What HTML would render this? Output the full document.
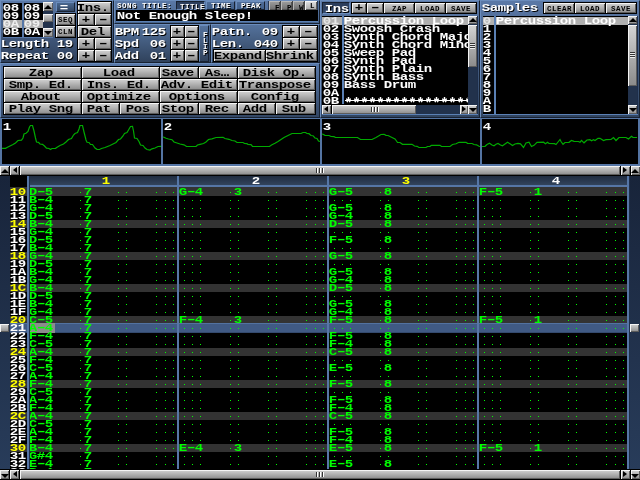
<!DOCTYPE html>
<html><head><meta charset="utf-8"><title>Tracker</title><style>
html,body{margin:0;padding:0;background:#40608c;overflow:hidden}
#r{position:relative;width:640px;height:480px;overflow:hidden;will-change:transform;font-family:"Liberation Mono",monospace}
#r div,#r span,#r i,#r svg{position:absolute;display:block}
.clip{overflow:hidden}
.p{box-sizing:border-box;border:1px solid;border-color:#6a8cbc #182232 #182232 #6a8cbc}
.b{box-sizing:border-box;border:1px solid #000;background:linear-gradient(#d4d4d4,#8a8a8a);box-shadow:inset 1px 1px 0 #f4f4f4,inset -1px -1px 0 #5c5c5c}
.b.pr{background:linear-gradient(#2a3c5a,#384e72);box-shadow:inset 1px 1px 0 #1a2840,inset -1px -1px 0 #5878a8;border-color:#101828}
.b.nb{border:0}
.b.hi{background:linear-gradient(#e4e4e4,#a8a8a8)}
.b.dk{background:linear-gradient(#a0a0a0,#6c6c6c);box-shadow:inset 1px 1px 0 #b8b8b8,inset -1px -1px 0 #555}
.t{font:bold 11px/8px "Liberation Mono",monospace;height:8px;white-space:pre;color:#fff;letter-spacing:-0.35px;transform-origin:0 0;transform:translateX(-1.3px) scale(1.28,0.96);text-shadow:0.8px 1px 0 #000}
.fl{box-sizing:border-box;border:1px solid;border-color:#6a8cbc #182232 #182232 #6a8cbc;background:linear-gradient(#54729c,#30425c)}
.fl.prs{border-color:#182232 #6a8cbc #6a8cbc #182232;background:linear-gradient(#2a3c5a,#34486a)}
.ast{font:bold 16px/16px "Liberation Mono",monospace;height:16px;white-space:pre;color:#fff;transform-origin:0 0;transform:translate(-0.5px,0.6px) scale(0.8333,0.9)}
.t.w{transform:translate(-3.6px,-0.8px) scale(2.05,0.96)}
.t.n{text-shadow:none}
.t.k{text-shadow:none;color:#000}
.s{font:bold 7.5px/6px "Liberation Mono",monospace;height:6px;white-space:pre;color:#fff;letter-spacing:0.5px;text-shadow:1px 1px 0 #000}
.s.k{text-shadow:none;color:#000}
.sc{font:bold 9px/8px "Liberation Mono",monospace;height:8px;white-space:pre;color:#fff}
.d{width:1px;height:1px;background:#0f0}
.au{width:0;height:0;border-left:4px solid transparent;border-right:4px solid transparent;border-bottom:4px solid #000}
.ad{width:0;height:0;border-left:4px solid transparent;border-right:4px solid transparent;border-top:4px solid #000}
.al{width:0;height:0;border-top:3.5px solid transparent;border-bottom:3.5px solid transparent;border-right:4px solid #000}
.ar{width:0;height:0;border-top:3.5px solid transparent;border-bottom:3.5px solid transparent;border-left:4px solid #000}
.grip{width:5px;height:6px;background:repeating-linear-gradient(#333 0 1px,#eee 1px 2px)}
.gripv{width:9px;height:5px;background:repeating-linear-gradient(90deg,#333 0 1px,#fff 1px 2px,transparent 2px 3px)}
</style></head><body><div id="r">
<div class="p" style="left:0px;top:0px;width:114px;height:63px;background:linear-gradient(#5a78a6,#2e405c)"></div>
<div class="p" style="left:114px;top:0px;width:206px;height:24px;background:linear-gradient(#5a78a6,#46648c)"></div>
<div class="p" style="left:114px;top:24px;width:97px;height:39px;background:linear-gradient(#54729c,#30425c)"></div>
<div class="p" style="left:211px;top:24px;width:109px;height:39px;background:linear-gradient(#54729c,#30425c)"></div>
<div class="p" style="left:0px;top:63px;width:320px;height:55px;background:linear-gradient(#5878a8,#324664)"></div>
<div class="p" style="left:320px;top:0px;width:160px;height:118px;background:linear-gradient(#5a78a6,#304460)"></div>
<div class="p" style="left:480px;top:0px;width:160px;height:118px;background:linear-gradient(#5a78a6,#304460)"></div>
<div style="left:3px;top:3px;width:19px;height:34px;background:#000;"></div>
<div style="left:22px;top:3px;width:2px;height:34px;background:#5676a6;"></div>
<div style="left:24px;top:3px;width:19px;height:34px;background:#000;"></div>
<div style="left:3px;top:37px;width:50px;height:1px;background:#5676a6;"></div>
<span class="t n" style="left:4px;top:4px;color:#fff;">08</span>
<span class="t n" style="left:25px;top:4px;color:#fff;">08</span>
<span class="t n" style="left:4px;top:12px;color:#fff;">09</span>
<span class="t n" style="left:25px;top:12px;color:#fff;">09</span>
<div style="left:3px;top:20px;width:19px;height:8px;background:#b0b0b0;"></div>
<div style="left:24px;top:20px;width:19px;height:8px;background:#b0b0b0;"></div>
<span class="t n" style="left:4px;top:20px;color:#eee;">0A</span>
<span class="t n" style="left:25px;top:20px;color:#eee;">09</span>
<span class="t n" style="left:4px;top:28px;color:#fff;">0B</span>
<span class="t n" style="left:25px;top:28px;color:#fff;">0A</span>
<div style="left:43px;top:2px;width:10px;height:35px;background:#22324c;"></div>
<div class="b nb" style="left:43px;top:2px;width:10px;height:9px"></div>
<i class="au" style="left:44px;top:5px"></i>
<div class="b nb" style="left:43px;top:14px;width:10px;height:8px"></div>
<div class="b nb" style="left:43px;top:28px;width:10px;height:9px"></div>
<i class="ad" style="left:44px;top:31px"></i>
<div class="fl" style="left:56px;top:2px;width:19px;height:10px;background:linear-gradient(#4a6890,#304462)"></div>
<span class="t n" style="left:61px;top:4px;color:#fff;">=</span>
<div class="b" style="left:55px;top:13px;width:21px;height:13px"></div>
<span class="s k" style="left:58px;top:17px;color:#000;">SEQ</span>
<div class="b" style="left:55px;top:25px;width:21px;height:13px"></div>
<span class="s k" style="left:58px;top:29px;color:#000;">CLN</span>
<div class="b" style="left:77px;top:1px;width:35px;height:13px"></div>
<span class="t k" style="left:78px;top:4px;color:#000;">Ins.</span>
<div class="b" style="left:77px;top:13px;width:18px;height:13px"></div>
<span class="t k" style="left:83px;top:16px;color:#000;">+</span>
<div class="b" style="left:94px;top:13px;width:18px;height:13px"></div>
<span class="t k w" style="left:100px;top:16px;color:#000;">-</span>
<div class="b" style="left:77px;top:25px;width:35px;height:13px"></div>
<span class="t k" style="left:82px;top:28px;color:#000;">Del</span>
<div class="b" style="left:77px;top:37px;width:18px;height:13px"></div>
<span class="t k" style="left:83px;top:40px;color:#000;">+</span>
<div class="b" style="left:94px;top:37px;width:18px;height:13px"></div>
<span class="t k w" style="left:100px;top:40px;color:#000;">-</span>
<div class="b" style="left:77px;top:49px;width:18px;height:13px"></div>
<span class="t k" style="left:83px;top:52px;color:#000;">+</span>
<div class="b" style="left:94px;top:49px;width:18px;height:13px"></div>
<span class="t k w" style="left:100px;top:52px;color:#000;">-</span>
<span class="t" style="left:2px;top:40px;">Length</span>
<span class="t" style="left:58px;top:40px;">19</span>
<span class="t" style="left:2px;top:52px;">Repeat</span>
<span class="t" style="left:58px;top:52px;">00</span>
<span class="s" style="left:117px;top:3px;color:#fff;">SONG TITLE:</span>
<div class="fl prs" style="left:176px;top:1px;width:29px;height:9px"></div>
<span class="s" style="left:180px;top:4px;color:#fff;">TITLE</span>
<div class="fl" style="left:206px;top:1px;width:29px;height:9px;background:linear-gradient(#4e6c98,#42608a)"></div>
<span class="s" style="left:211px;top:3px;color:#fff;">TIME</span>
<div class="fl" style="left:236px;top:1px;width:29px;height:9px;background:linear-gradient(#4e6c98,#42608a)"></div>
<span class="s" style="left:241px;top:3px;color:#fff;">PEAK</span>
<div class="b nb dk" style="left:269px;top:1px;width:11px;height:9px"></div>
<span class="s k" style="left:275px;top:5px;color:#000;">F</span>
<div class="b nb dk" style="left:281px;top:1px;width:11px;height:9px"></div>
<span class="s k" style="left:287px;top:5px;color:#000;">P</span>
<div class="b nb dk" style="left:293px;top:1px;width:11px;height:9px"></div>
<span class="s k" style="left:299px;top:5px;color:#000;">W</span>
<div class="b nb hi" style="left:305px;top:1px;width:12px;height:9px"></div>
<span class="s k" style="left:310px;top:3px;color:#000;">L</span>
<div style="left:268px;top:1px;width:1px;height:9px;background:#2a3a54;"></div>
<div style="left:280px;top:1px;width:1px;height:9px;background:#444;"></div>
<div style="left:292px;top:1px;width:1px;height:9px;background:#444;"></div>
<div style="left:304px;top:1px;width:1px;height:9px;background:#444;"></div>
<div style="left:317px;top:1px;width:1px;height:9px;background:#2a3a54;"></div>
<div style="left:116px;top:10px;width:202px;height:11px;background:#000;"></div>
<div style="left:116px;top:21px;width:202px;height:1px;background:#5a80b4;"></div>
<span class="t n" style="left:118px;top:12px;color:#fff;">Not Enough Sleep!</span>
<span class="t" style="left:116px;top:28px;">BPM</span>
<span class="t" style="left:143px;top:28px;">125</span>
<span class="t" style="left:116px;top:40px;">Spd</span>
<span class="t" style="left:151px;top:40px;">06</span>
<span class="t" style="left:116px;top:52px;">Add</span>
<span class="t" style="left:151px;top:52px;">01</span>
<div class="b" style="left:170px;top:25px;width:15px;height:13px"></div>
<span class="t k" style="left:174px;top:28px;color:#000;">+</span>
<div class="b" style="left:184px;top:25px;width:15px;height:13px"></div>
<span class="t k w" style="left:188px;top:28px;color:#000;">-</span>
<div class="b" style="left:170px;top:37px;width:15px;height:13px"></div>
<span class="t k" style="left:174px;top:40px;color:#000;">+</span>
<div class="b" style="left:184px;top:37px;width:15px;height:13px"></div>
<span class="t k w" style="left:188px;top:40px;color:#000;">-</span>
<div class="b" style="left:170px;top:49px;width:15px;height:13px"></div>
<span class="t k" style="left:174px;top:52px;color:#000;">+</span>
<div class="b" style="left:184px;top:49px;width:15px;height:13px"></div>
<span class="t k w" style="left:188px;top:52px;color:#000;">-</span>
<div class="fl" style="left:199px;top:25px;width:10px;height:37px"></div>
<span class="s" style="left:203px;top:32px;color:#fff;">F</span>
<span class="s" style="left:203px;top:38px;color:#fff;">L</span>
<span class="s" style="left:203px;top:44px;color:#fff;">I</span>
<span class="s" style="left:203px;top:50px;color:#fff;">P</span>
<span class="t" style="left:213px;top:28px;">Patn.</span>
<span class="t" style="left:263px;top:28px;">09</span>
<span class="t" style="left:213px;top:40px;">Len.</span>
<span class="t" style="left:255px;top:40px;">040</span>
<div class="b" style="left:282px;top:25px;width:18px;height:13px"></div>
<span class="t k" style="left:288px;top:28px;color:#000;">+</span>
<div class="b" style="left:299px;top:25px;width:19px;height:13px"></div>
<span class="t k w" style="left:305px;top:28px;color:#000;">-</span>
<div class="b" style="left:282px;top:37px;width:18px;height:13px"></div>
<span class="t k" style="left:288px;top:40px;color:#000;">+</span>
<div class="b" style="left:299px;top:37px;width:19px;height:13px"></div>
<span class="t k w" style="left:305px;top:40px;color:#000;">-</span>
<div class="b" style="left:213px;top:49px;width:53px;height:13px"></div>
<span class="t k" style="left:215px;top:52px;color:#000;">Expand</span>
<div class="b" style="left:265px;top:49px;width:53px;height:13px"></div>
<span class="t k" style="left:267px;top:52px;color:#000;">Shrink</span>
<div class="b" style="left:3px;top:66px;width:79px;height:13px"></div>
<span class="t k" style="left:30px;top:69px;color:#000;">Zap</span>
<div class="b" style="left:81px;top:66px;width:79px;height:13px"></div>
<span class="t k" style="left:104px;top:69px;color:#000;">Load</span>
<div class="b" style="left:159px;top:66px;width:40px;height:13px"></div>
<span class="t k" style="left:163px;top:69px;color:#000;">Save</span>
<div class="b" style="left:198px;top:66px;width:40px;height:13px"></div>
<span class="t k" style="left:206px;top:69px;color:#000;">As…</span>
<div class="b" style="left:237px;top:66px;width:79px;height:13px"></div>
<span class="t k" style="left:244px;top:69px;color:#000;">Disk Op.</span>
<div class="b" style="left:3px;top:78px;width:79px;height:13px"></div>
<span class="t k" style="left:10px;top:81px;color:#000;">Smp. Ed.</span>
<div class="b" style="left:81px;top:78px;width:79px;height:13px"></div>
<span class="t k" style="left:88px;top:81px;color:#000;">Ins. Ed.</span>
<div class="b" style="left:159px;top:78px;width:79px;height:13px"></div>
<span class="t k" style="left:162px;top:81px;color:#000;">Adv. Edit</span>
<div class="b" style="left:237px;top:78px;width:79px;height:13px"></div>
<span class="t k" style="left:240px;top:81px;color:#000;">Transpose</span>
<div class="b" style="left:3px;top:90px;width:79px;height:13px"></div>
<span class="t k" style="left:22px;top:93px;color:#000;">About</span>
<div class="b" style="left:81px;top:90px;width:79px;height:13px"></div>
<span class="t k" style="left:88px;top:93px;color:#000;">Optimize</span>
<div class="b" style="left:159px;top:90px;width:79px;height:13px"></div>
<span class="t k" style="left:170px;top:93px;color:#000;">Options</span>
<div class="b" style="left:237px;top:90px;width:79px;height:13px"></div>
<span class="t k" style="left:252px;top:93px;color:#000;">Config</span>
<div class="b" style="left:3px;top:102px;width:79px;height:13px"></div>
<span class="t k" style="left:10px;top:105px;color:#000;">Play Sng</span>
<div class="b" style="left:81px;top:102px;width:39px;height:13px"></div>
<span class="t k" style="left:88px;top:105px;color:#000;">Pat</span>
<div class="b" style="left:119px;top:102px;width:41px;height:13px"></div>
<span class="t k" style="left:127px;top:105px;color:#000;">Pos</span>
<div class="b" style="left:159px;top:102px;width:40px;height:13px"></div>
<span class="t k" style="left:163px;top:105px;color:#000;">Stop</span>
<div class="b" style="left:198px;top:102px;width:40px;height:13px"></div>
<span class="t k" style="left:206px;top:105px;color:#000;">Rec</span>
<div class="b" style="left:237px;top:102px;width:39px;height:13px"></div>
<span class="t k" style="left:244px;top:105px;color:#000;">Add</span>
<div class="b" style="left:275px;top:102px;width:41px;height:13px"></div>
<span class="t k" style="left:283px;top:105px;color:#000;">Sub</span>
<div class="fl prs" style="left:322px;top:2px;width:28px;height:12px"></div>
<span class="t" style="left:326px;top:5px;color:#fff;">Ins</span>
<div class="b" style="left:351px;top:2px;width:16px;height:12px"></div>
<span class="t k" style="left:356px;top:4px;color:#000;">+</span>
<div class="b" style="left:366px;top:2px;width:18px;height:12px"></div>
<span class="t k w" style="left:372px;top:4px;color:#000;">-</span>
<div class="b" style="left:383px;top:2px;width:32px;height:12px"></div>
<span class="s k" style="left:392px;top:6px;color:#000;">ZAP</span>
<div class="b" style="left:414px;top:2px;width:32px;height:12px"></div>
<span class="s k" style="left:420px;top:6px;color:#000;">LOAD</span>
<div class="b" style="left:445px;top:2px;width:32px;height:12px"></div>
<span class="s k" style="left:451px;top:6px;color:#000;">SAVE</span>
<div style="left:322px;top:16px;width:20px;height:98px;background:#000;"></div>
<div style="left:342px;top:16px;width:2px;height:98px;background:#5a80b4;"></div>
<div style="left:344px;top:16px;width:124px;height:98px;background:#000;"></div>
<div style="left:322px;top:114px;width:156px;height:1px;background:#5a80b4;"></div>
<div class="clip" style="left:344px;top:16px;width:124px;height:88px">
<div style="left:0px;top:1px;width:124px;height:8px;background:#b0b0b0;"></div>
<span class="t n" style="left:1px;top:1px;color:#fff;">Percussion Loop</span>
<span class="t n" style="left:1px;top:9px;color:#fff;">Swoosh Crash</span>
<span class="t n" style="left:1px;top:17px;color:#fff;">Synth Chord Major</span>
<span class="t n" style="left:1px;top:25px;color:#fff;">Synth Chord Minor</span>
<span class="t n" style="left:1px;top:33px;color:#fff;">Sweep Pad</span>
<span class="t n" style="left:1px;top:41px;color:#fff;">Synth Pad</span>
<span class="t n" style="left:1px;top:49px;color:#fff;">Synth Plain</span>
<span class="t n" style="left:1px;top:57px;color:#fff;">Synth Bass</span>
<span class="t n" style="left:1px;top:65px;color:#fff;">Bass Drum</span>
<span class="ast" style="left:1px;top:81px;color:#fff;">**********************</span>
<div style="left:1px;top:84px;width:123px;height:1px;background:#fff;"></div>
</div>
<div style="left:322px;top:17px;width:20px;height:8px;background:#b0b0b0;"></div>
<span class="t n" style="left:324px;top:17px;color:#e4e4e4;">01</span>
<span class="t n" style="left:324px;top:25px;color:#fff;">02</span>
<span class="t n" style="left:324px;top:33px;color:#fff;">03</span>
<span class="t n" style="left:324px;top:41px;color:#fff;">04</span>
<span class="t n" style="left:324px;top:49px;color:#fff;">05</span>
<span class="t n" style="left:324px;top:57px;color:#fff;">06</span>
<span class="t n" style="left:324px;top:65px;color:#fff;">07</span>
<span class="t n" style="left:324px;top:73px;color:#fff;">08</span>
<span class="t n" style="left:324px;top:81px;color:#fff;">09</span>
<span class="t n" style="left:324px;top:89px;color:#fff;">0A</span>
<span class="t n" style="left:324px;top:97px;color:#fff;">0B</span>
<div style="left:468px;top:16px;width:9px;height:98px;background:#22324c;"></div>
<div class="b nb" style="left:468px;top:16px;width:9px;height:8px"></div>
<i class="au" style="left:468.5px;top:18px"></i>
<div class="b nb" style="left:468px;top:25px;width:9px;height:42px"></div>
<i class="grip" style="left:470px;top:43px"></i>
<div class="b nb" style="left:468px;top:105px;width:9px;height:9px"></div>
<i class="ad" style="left:468.5px;top:108px"></i>
<div style="left:477px;top:16px;width:1px;height:98px;background:#1e2e4a;"></div>
<div style="left:322px;top:105px;width:146px;height:9px;background:#22324c;"></div>
<div class="b nb" style="left:322px;top:105px;width:9px;height:9px"></div>
<i class="al" style="left:324px;top:106px"></i>
<div style="left:331px;top:105px;width:1px;height:9px;background:#000;"></div>
<div class="b nb" style="left:332px;top:105px;width:84px;height:9px"></div>
<i class="gripv" style="left:371px;top:107px"></i>
<div class="b nb" style="left:460px;top:105px;width:8px;height:9px"></div>
<i class="ar" style="left:462px;top:106px"></i>
<div style="left:322px;top:104px;width:146px;height:1px;background:#000;"></div>
<span class="t" style="left:483px;top:4px;">Samples</span>
<div class="b" style="left:543px;top:2px;width:32px;height:12px"></div>
<span class="s k" style="left:547px;top:6px;color:#000;">CLEAR</span>
<div class="b" style="left:574px;top:2px;width:32px;height:12px"></div>
<span class="s k" style="left:580px;top:6px;color:#000;">LOAD</span>
<div class="b" style="left:605px;top:2px;width:32px;height:12px"></div>
<span class="s k" style="left:611px;top:6px;color:#000;">SAVE</span>
<div style="left:483px;top:16px;width:11px;height:98px;background:#000;"></div>
<div style="left:494px;top:16px;width:2px;height:98px;background:#5a80b4;"></div>
<div style="left:496px;top:16px;width:132px;height:98px;background:#000;"></div>
<div style="left:483px;top:114px;width:155px;height:1px;background:#5a80b4;"></div>
<div style="left:483px;top:17px;width:11px;height:8px;background:#b0b0b0;"></div>
<div style="left:496px;top:17px;width:132px;height:8px;background:#b0b0b0;"></div>
<span class="t n" style="left:497px;top:17px;color:#fff;">Percussion Loop</span>
<span class="t n" style="left:484px;top:17px;color:#e4e4e4;">0</span>
<span class="t n" style="left:484px;top:25px;color:#fff;">1</span>
<span class="t n" style="left:484px;top:33px;color:#fff;">2</span>
<span class="t n" style="left:484px;top:41px;color:#fff;">3</span>
<span class="t n" style="left:484px;top:49px;color:#fff;">4</span>
<span class="t n" style="left:484px;top:57px;color:#fff;">5</span>
<span class="t n" style="left:484px;top:65px;color:#fff;">6</span>
<span class="t n" style="left:484px;top:73px;color:#fff;">7</span>
<span class="t n" style="left:484px;top:81px;color:#fff;">8</span>
<span class="t n" style="left:484px;top:89px;color:#fff;">9</span>
<span class="t n" style="left:484px;top:97px;color:#fff;">A</span>
<span class="t n" style="left:484px;top:105px;color:#fff;">B</span>
<div style="left:628px;top:16px;width:9px;height:98px;background:#22324c;"></div>
<div class="b nb" style="left:628px;top:16px;width:9px;height:8px"></div>
<i class="au" style="left:628.5px;top:18px"></i>
<div class="b nb" style="left:628px;top:25px;width:9px;height:61px"></div>
<i class="grip" style="left:630px;top:52px"></i>
<div class="b nb" style="left:628px;top:105px;width:9px;height:9px"></div>
<i class="ad" style="left:628.5px;top:108px"></i>
<div style="left:637px;top:16px;width:1px;height:98px;background:#1e2e4a;"></div>
<div style="left:0px;top:118px;width:640px;height:48px;background:#5474a2;"></div>
<div style="left:2px;top:119px;width:159px;height:45px;background:#000;"></div>
<span class="t n" style="left:4px;top:123px;color:#fff;">1</span>
<div style="left:163px;top:119px;width:157px;height:45px;background:#000;"></div>
<span class="t n" style="left:165px;top:123px;color:#fff;">2</span>
<div style="left:322px;top:119px;width:158px;height:45px;background:#000;"></div>
<span class="t n" style="left:324px;top:123px;color:#fff;">3</span>
<div style="left:482px;top:119px;width:156px;height:45px;background:#000;"></div>
<span class="t n" style="left:484px;top:123px;color:#fff;">4</span>
<svg style="left:0;top:117px" width="640" height="49" viewBox="0 117 640 49"><polyline points="2,148.4 5.5,148.4 7.5,147.3 10,146 13,144.5 15.5,143 18,140.5 21.5,140.2 23,138 24,134 26,133.3 28,131.5 29.5,127 30.5,125.5 32.5,125.5 34,131 35.5,138 36.5,142 38.5,142.3 40,144 42.5,144.3 44.5,146 46.5,148.2 49,148.5 50.5,149.5 52,148.5 55.5,148.3 57.5,147 60,145.5 63.5,144 66,142 68.5,139.5 71.5,138.5 73.5,135 75,133.5 77.5,132.5 79,129 80,125.5 82.5,125.5 84,132 86,140 87,142.3 89,142.5 90.5,144.5 92.5,144.5 95,148 97,149.3 99.5,149.5 101.5,148.5 105,147.5 110,145.5 114,143.5 116,142.5 118.5,139.5 120.5,139 123,136 124.5,133.5 127,132.5 128.5,130 130.5,126.5 132.5,126.3 133.5,131 134.5,138 137,138.5 139,141.5 140.5,145 143,145.5 145,148 147,149.5 150,150 152,148.8 155,148 158,146.5 161,146.3" fill="none" stroke="#0a0" stroke-width="1.2"/><polyline points="163,137 164,137.3 166,138.3 168.5,139 172,139.7 174,142 177,143 180,144 184,144.8 186.5,146.5 196,146.5 197.5,145 200,144.3 203.5,143.5 206,142 208.5,139.5 212,138.8 216,137.5 223,137.3 225,138.5 229,139.3 232,140.5 235,141 237,142.5 243,142.5 244.5,143.5 247,143.7 248,144.5 251,144.7 252.5,146.5 269.5,146.5 271.5,145 275,143.3 278,141.5 281,139.5 284,137.5 288,135.5 292,133.5 301,133.5 303,132.5 305.5,132.5 307,133.5 309,133.7 311,135.5 313,135.7 315,138 317,138.5 318.5,141 320,141.5" fill="none" stroke="#0a0" stroke-width="1.2"/><polyline points="322,134 323,134.3 325,135.3 329,135.5 331,136.5 334,136.7 335.5,137.5 357.5,137.5 360.5,139.5 372,139.5 376,137.5 381,134.5 384,134.3 386,135.3 388,135.5 392,137.5 395,139 396.5,141 397.5,142.5 400,142.5 402.5,144.3 412,144.3 414.5,146 417,146.3 419,147.5 426,147.5 427.5,146.5 430,146.3 431.5,145.3 440,145.3 441.5,146.5 450,146.5 452.5,144.5 456,143.8 459,142.3 466,142.3 467.5,143.3 472,143.5 474,144.5 476.5,144.8 479,146.3 480,146.5" fill="none" stroke="#0a0" stroke-width="1.2"/><polyline points="482,146.5 485,146.3 487,144.5 489.5,143.3 492,145 494,145.8 496,144.3 498,143.5 500.5,145 502.5,145.8 505,144 507.5,142.3 510,143.8 512.5,145.5 515,144 518,143.3 520.5,143.8 523.5,147.5 526,143 529,142.2 531.5,146.5 534,145.3 537,142.3 543.5,142.2 545.5,143.8 547.5,142.3 549,143.5 554.5,143.7 556,144.5 558,142 560,139.5 561,141.5 563,144.3 565,142.5 569,142.3 571.5,140.5 574,141.3 578.5,141.5 580,142.3 581.5,140.3 584,142.8 587,140 590,139.7 591.5,140.8 593.5,139.7 595,140.5 598,138.3 600,138.3 603.5,140.5 606,139.7 611,139.5 613.5,137.5 616,140.5 619,137.5 626,137.5 628.5,139 631.5,136.3 633,137.5 637,137.5" fill="none" stroke="#0a0" stroke-width="1.2"/></svg>
<div style="left:0px;top:166px;width:640px;height:10px;background:#22324c;"></div>
<div class="b" style="left:-1px;top:165px;width:11px;height:11px"></div>
<i class="au" style="left:1px;top:169px"></i>
<div class="b" style="left:9px;top:165px;width:11px;height:11px"></div>
<i class="al" style="left:13px;top:167px"></i>
<div class="b" style="left:19px;top:165px;width:602px;height:11px"></div>
<i class="gripv" style="left:316px;top:168px"></i>
<div class="b" style="left:620px;top:165px;width:11px;height:11px"></div>
<i class="ar" style="left:623px;top:167px"></i>
<div class="b" style="left:630px;top:165px;width:11px;height:11px"></div>
<i class="au" style="left:631px;top:169px"></i>
<div style="left:0px;top:164px;width:640px;height:2px;background:#5676a6;"></div>
<div style="left:0px;top:176px;width:640px;height:294px;background:#000;"></div>
<div style="left:0px;top:176px;width:10px;height:294px;background:linear-gradient(#18243a,#283c5a);"></div>
<div style="left:630px;top:176px;width:10px;height:294px;background:linear-gradient(#18243a,#283c5a);"></div>
<div style="left:627px;top:176px;width:2px;height:294px;background:#5676a6;"></div>
<div style="left:629px;top:176px;width:1px;height:294px;background:#1e2e4a;"></div>
<div style="left:29px;top:176px;width:598px;height:10px;background:linear-gradient(#202c40,#34465f);"></div>
<div style="left:29px;top:185px;width:598px;height:2px;background:#5676a6;"></div>
<div class="clip" style="left:0;top:176px;width:640px;height:294px">
<div style="left:10px;top:11px;width:617px;height:9px;background:#333;"></div>
<span class="t n" style="left:11px;top:12px;color:#ff0;">10</span>
<span class="t n" style="left:30px;top:12px;color:#0f0;">D</span>
<span class="t n w" style="left:38px;top:12px;color:#0f0;">-</span>
<span class="t n" style="left:46px;top:12px;color:#0f0;">5</span>
<i class="d" style="left:80px;top:16px"></i>
<span class="t n" style="left:85px;top:12px;color:#0f0;">7</span>
<i class="d" style="left:118px;top:16px"></i>
<i class="d" style="left:126px;top:16px"></i>
<i class="d" style="left:156px;top:16px"></i>
<i class="d" style="left:165px;top:16px"></i>
<i class="d" style="left:173px;top:16px"></i>
<span class="t n" style="left:180px;top:12px;color:#0f0;">G</span>
<span class="t n w" style="left:188px;top:12px;color:#0f0;">-</span>
<span class="t n" style="left:196px;top:12px;color:#0f0;">4</span>
<i class="d" style="left:230px;top:16px"></i>
<span class="t n" style="left:235px;top:12px;color:#0f0;">3</span>
<i class="d" style="left:268px;top:16px"></i>
<i class="d" style="left:276px;top:16px"></i>
<i class="d" style="left:306px;top:16px"></i>
<i class="d" style="left:315px;top:16px"></i>
<i class="d" style="left:323px;top:16px"></i>
<span class="t n" style="left:330px;top:12px;color:#0f0;">G</span>
<span class="t n w" style="left:338px;top:12px;color:#0f0;">-</span>
<span class="t n" style="left:346px;top:12px;color:#0f0;">5</span>
<i class="d" style="left:380px;top:16px"></i>
<span class="t n" style="left:385px;top:12px;color:#0f0;">8</span>
<i class="d" style="left:418px;top:16px"></i>
<i class="d" style="left:426px;top:16px"></i>
<i class="d" style="left:456px;top:16px"></i>
<i class="d" style="left:465px;top:16px"></i>
<i class="d" style="left:473px;top:16px"></i>
<span class="t n" style="left:480px;top:12px;color:#0f0;">F</span>
<span class="t n w" style="left:488px;top:12px;color:#0f0;">-</span>
<span class="t n" style="left:496px;top:12px;color:#0f0;">5</span>
<i class="d" style="left:530px;top:16px"></i>
<span class="t n" style="left:535px;top:12px;color:#0f0;">1</span>
<i class="d" style="left:568px;top:16px"></i>
<i class="d" style="left:576px;top:16px"></i>
<i class="d" style="left:606px;top:16px"></i>
<i class="d" style="left:615px;top:16px"></i>
<i class="d" style="left:623px;top:16px"></i>
<span class="t n" style="left:11px;top:20px;color:#fff;">11</span>
<span class="t n" style="left:30px;top:20px;color:#0f0;">B</span>
<span class="t n w" style="left:38px;top:20px;color:#0f0;">-</span>
<span class="t n" style="left:46px;top:20px;color:#0f0;">4</span>
<i class="d" style="left:80px;top:24px"></i>
<span class="t n" style="left:85px;top:20px;color:#0f0;">7</span>
<i class="d" style="left:118px;top:24px"></i>
<i class="d" style="left:126px;top:24px"></i>
<i class="d" style="left:156px;top:24px"></i>
<i class="d" style="left:165px;top:24px"></i>
<i class="d" style="left:173px;top:24px"></i>
<i class="d" style="left:184px;top:24px"></i>
<i class="d" style="left:192px;top:24px"></i>
<i class="d" style="left:200px;top:24px"></i>
<i class="d" style="left:230px;top:24px"></i>
<i class="d" style="left:238px;top:24px"></i>
<i class="d" style="left:268px;top:24px"></i>
<i class="d" style="left:276px;top:24px"></i>
<i class="d" style="left:306px;top:24px"></i>
<i class="d" style="left:315px;top:24px"></i>
<i class="d" style="left:323px;top:24px"></i>
<i class="d" style="left:334px;top:24px"></i>
<i class="d" style="left:342px;top:24px"></i>
<i class="d" style="left:350px;top:24px"></i>
<i class="d" style="left:380px;top:24px"></i>
<i class="d" style="left:388px;top:24px"></i>
<i class="d" style="left:418px;top:24px"></i>
<i class="d" style="left:426px;top:24px"></i>
<i class="d" style="left:456px;top:24px"></i>
<i class="d" style="left:465px;top:24px"></i>
<i class="d" style="left:473px;top:24px"></i>
<i class="d" style="left:484px;top:24px"></i>
<i class="d" style="left:492px;top:24px"></i>
<i class="d" style="left:500px;top:24px"></i>
<i class="d" style="left:530px;top:24px"></i>
<i class="d" style="left:538px;top:24px"></i>
<i class="d" style="left:568px;top:24px"></i>
<i class="d" style="left:576px;top:24px"></i>
<i class="d" style="left:606px;top:24px"></i>
<i class="d" style="left:615px;top:24px"></i>
<i class="d" style="left:623px;top:24px"></i>
<span class="t n" style="left:11px;top:28px;color:#fff;">12</span>
<span class="t n" style="left:30px;top:28px;color:#0f0;">G</span>
<span class="t n w" style="left:38px;top:28px;color:#0f0;">-</span>
<span class="t n" style="left:46px;top:28px;color:#0f0;">4</span>
<i class="d" style="left:80px;top:32px"></i>
<span class="t n" style="left:85px;top:28px;color:#0f0;">7</span>
<i class="d" style="left:118px;top:32px"></i>
<i class="d" style="left:126px;top:32px"></i>
<i class="d" style="left:156px;top:32px"></i>
<i class="d" style="left:165px;top:32px"></i>
<i class="d" style="left:173px;top:32px"></i>
<i class="d" style="left:184px;top:32px"></i>
<i class="d" style="left:192px;top:32px"></i>
<i class="d" style="left:200px;top:32px"></i>
<i class="d" style="left:230px;top:32px"></i>
<i class="d" style="left:238px;top:32px"></i>
<i class="d" style="left:268px;top:32px"></i>
<i class="d" style="left:276px;top:32px"></i>
<i class="d" style="left:306px;top:32px"></i>
<i class="d" style="left:315px;top:32px"></i>
<i class="d" style="left:323px;top:32px"></i>
<span class="t n" style="left:330px;top:28px;color:#0f0;">G</span>
<span class="t n w" style="left:338px;top:28px;color:#0f0;">-</span>
<span class="t n" style="left:346px;top:28px;color:#0f0;">5</span>
<i class="d" style="left:380px;top:32px"></i>
<span class="t n" style="left:385px;top:28px;color:#0f0;">8</span>
<i class="d" style="left:418px;top:32px"></i>
<i class="d" style="left:426px;top:32px"></i>
<i class="d" style="left:456px;top:32px"></i>
<i class="d" style="left:465px;top:32px"></i>
<i class="d" style="left:473px;top:32px"></i>
<i class="d" style="left:484px;top:32px"></i>
<i class="d" style="left:492px;top:32px"></i>
<i class="d" style="left:500px;top:32px"></i>
<i class="d" style="left:530px;top:32px"></i>
<i class="d" style="left:538px;top:32px"></i>
<i class="d" style="left:568px;top:32px"></i>
<i class="d" style="left:576px;top:32px"></i>
<i class="d" style="left:606px;top:32px"></i>
<i class="d" style="left:615px;top:32px"></i>
<i class="d" style="left:623px;top:32px"></i>
<span class="t n" style="left:11px;top:36px;color:#fff;">13</span>
<span class="t n" style="left:30px;top:36px;color:#0f0;">D</span>
<span class="t n w" style="left:38px;top:36px;color:#0f0;">-</span>
<span class="t n" style="left:46px;top:36px;color:#0f0;">5</span>
<i class="d" style="left:80px;top:40px"></i>
<span class="t n" style="left:85px;top:36px;color:#0f0;">7</span>
<i class="d" style="left:118px;top:40px"></i>
<i class="d" style="left:126px;top:40px"></i>
<i class="d" style="left:156px;top:40px"></i>
<i class="d" style="left:165px;top:40px"></i>
<i class="d" style="left:173px;top:40px"></i>
<i class="d" style="left:184px;top:40px"></i>
<i class="d" style="left:192px;top:40px"></i>
<i class="d" style="left:200px;top:40px"></i>
<i class="d" style="left:230px;top:40px"></i>
<i class="d" style="left:238px;top:40px"></i>
<i class="d" style="left:268px;top:40px"></i>
<i class="d" style="left:276px;top:40px"></i>
<i class="d" style="left:306px;top:40px"></i>
<i class="d" style="left:315px;top:40px"></i>
<i class="d" style="left:323px;top:40px"></i>
<span class="t n" style="left:330px;top:36px;color:#0f0;">G</span>
<span class="t n w" style="left:338px;top:36px;color:#0f0;">-</span>
<span class="t n" style="left:346px;top:36px;color:#0f0;">4</span>
<i class="d" style="left:380px;top:40px"></i>
<span class="t n" style="left:385px;top:36px;color:#0f0;">8</span>
<i class="d" style="left:418px;top:40px"></i>
<i class="d" style="left:426px;top:40px"></i>
<i class="d" style="left:456px;top:40px"></i>
<i class="d" style="left:465px;top:40px"></i>
<i class="d" style="left:473px;top:40px"></i>
<i class="d" style="left:484px;top:40px"></i>
<i class="d" style="left:492px;top:40px"></i>
<i class="d" style="left:500px;top:40px"></i>
<i class="d" style="left:530px;top:40px"></i>
<i class="d" style="left:538px;top:40px"></i>
<i class="d" style="left:568px;top:40px"></i>
<i class="d" style="left:576px;top:40px"></i>
<i class="d" style="left:606px;top:40px"></i>
<i class="d" style="left:615px;top:40px"></i>
<i class="d" style="left:623px;top:40px"></i>
<div style="left:10px;top:44px;width:617px;height:8px;background:#333;"></div>
<span class="t n" style="left:11px;top:44px;color:#ff0;">14</span>
<span class="t n" style="left:30px;top:44px;color:#0f0;">B</span>
<span class="t n w" style="left:38px;top:44px;color:#0f0;">-</span>
<span class="t n" style="left:46px;top:44px;color:#0f0;">4</span>
<i class="d" style="left:80px;top:48px"></i>
<span class="t n" style="left:85px;top:44px;color:#0f0;">7</span>
<i class="d" style="left:118px;top:48px"></i>
<i class="d" style="left:126px;top:48px"></i>
<i class="d" style="left:156px;top:48px"></i>
<i class="d" style="left:165px;top:48px"></i>
<i class="d" style="left:173px;top:48px"></i>
<i class="d" style="left:184px;top:48px"></i>
<i class="d" style="left:192px;top:48px"></i>
<i class="d" style="left:200px;top:48px"></i>
<i class="d" style="left:230px;top:48px"></i>
<i class="d" style="left:238px;top:48px"></i>
<i class="d" style="left:268px;top:48px"></i>
<i class="d" style="left:276px;top:48px"></i>
<i class="d" style="left:306px;top:48px"></i>
<i class="d" style="left:315px;top:48px"></i>
<i class="d" style="left:323px;top:48px"></i>
<span class="t n" style="left:330px;top:44px;color:#0f0;">D</span>
<span class="t n w" style="left:338px;top:44px;color:#0f0;">-</span>
<span class="t n" style="left:346px;top:44px;color:#0f0;">5</span>
<i class="d" style="left:380px;top:48px"></i>
<span class="t n" style="left:385px;top:44px;color:#0f0;">8</span>
<i class="d" style="left:418px;top:48px"></i>
<i class="d" style="left:426px;top:48px"></i>
<i class="d" style="left:456px;top:48px"></i>
<i class="d" style="left:465px;top:48px"></i>
<i class="d" style="left:473px;top:48px"></i>
<i class="d" style="left:484px;top:48px"></i>
<i class="d" style="left:492px;top:48px"></i>
<i class="d" style="left:500px;top:48px"></i>
<i class="d" style="left:530px;top:48px"></i>
<i class="d" style="left:538px;top:48px"></i>
<i class="d" style="left:568px;top:48px"></i>
<i class="d" style="left:576px;top:48px"></i>
<i class="d" style="left:606px;top:48px"></i>
<i class="d" style="left:615px;top:48px"></i>
<i class="d" style="left:623px;top:48px"></i>
<span class="t n" style="left:11px;top:52px;color:#fff;">15</span>
<span class="t n" style="left:30px;top:52px;color:#0f0;">G</span>
<span class="t n w" style="left:38px;top:52px;color:#0f0;">-</span>
<span class="t n" style="left:46px;top:52px;color:#0f0;">4</span>
<i class="d" style="left:80px;top:56px"></i>
<span class="t n" style="left:85px;top:52px;color:#0f0;">7</span>
<i class="d" style="left:118px;top:56px"></i>
<i class="d" style="left:126px;top:56px"></i>
<i class="d" style="left:156px;top:56px"></i>
<i class="d" style="left:165px;top:56px"></i>
<i class="d" style="left:173px;top:56px"></i>
<i class="d" style="left:184px;top:56px"></i>
<i class="d" style="left:192px;top:56px"></i>
<i class="d" style="left:200px;top:56px"></i>
<i class="d" style="left:230px;top:56px"></i>
<i class="d" style="left:238px;top:56px"></i>
<i class="d" style="left:268px;top:56px"></i>
<i class="d" style="left:276px;top:56px"></i>
<i class="d" style="left:306px;top:56px"></i>
<i class="d" style="left:315px;top:56px"></i>
<i class="d" style="left:323px;top:56px"></i>
<i class="d" style="left:334px;top:56px"></i>
<i class="d" style="left:342px;top:56px"></i>
<i class="d" style="left:350px;top:56px"></i>
<i class="d" style="left:380px;top:56px"></i>
<i class="d" style="left:388px;top:56px"></i>
<i class="d" style="left:418px;top:56px"></i>
<i class="d" style="left:426px;top:56px"></i>
<i class="d" style="left:456px;top:56px"></i>
<i class="d" style="left:465px;top:56px"></i>
<i class="d" style="left:473px;top:56px"></i>
<i class="d" style="left:484px;top:56px"></i>
<i class="d" style="left:492px;top:56px"></i>
<i class="d" style="left:500px;top:56px"></i>
<i class="d" style="left:530px;top:56px"></i>
<i class="d" style="left:538px;top:56px"></i>
<i class="d" style="left:568px;top:56px"></i>
<i class="d" style="left:576px;top:56px"></i>
<i class="d" style="left:606px;top:56px"></i>
<i class="d" style="left:615px;top:56px"></i>
<i class="d" style="left:623px;top:56px"></i>
<span class="t n" style="left:11px;top:60px;color:#fff;">16</span>
<span class="t n" style="left:30px;top:60px;color:#0f0;">D</span>
<span class="t n w" style="left:38px;top:60px;color:#0f0;">-</span>
<span class="t n" style="left:46px;top:60px;color:#0f0;">5</span>
<i class="d" style="left:80px;top:64px"></i>
<span class="t n" style="left:85px;top:60px;color:#0f0;">7</span>
<i class="d" style="left:118px;top:64px"></i>
<i class="d" style="left:126px;top:64px"></i>
<i class="d" style="left:156px;top:64px"></i>
<i class="d" style="left:165px;top:64px"></i>
<i class="d" style="left:173px;top:64px"></i>
<i class="d" style="left:184px;top:64px"></i>
<i class="d" style="left:192px;top:64px"></i>
<i class="d" style="left:200px;top:64px"></i>
<i class="d" style="left:230px;top:64px"></i>
<i class="d" style="left:238px;top:64px"></i>
<i class="d" style="left:268px;top:64px"></i>
<i class="d" style="left:276px;top:64px"></i>
<i class="d" style="left:306px;top:64px"></i>
<i class="d" style="left:315px;top:64px"></i>
<i class="d" style="left:323px;top:64px"></i>
<span class="t n" style="left:330px;top:60px;color:#0f0;">F</span>
<span class="t n w" style="left:338px;top:60px;color:#0f0;">-</span>
<span class="t n" style="left:346px;top:60px;color:#0f0;">5</span>
<i class="d" style="left:380px;top:64px"></i>
<span class="t n" style="left:385px;top:60px;color:#0f0;">8</span>
<i class="d" style="left:418px;top:64px"></i>
<i class="d" style="left:426px;top:64px"></i>
<i class="d" style="left:456px;top:64px"></i>
<i class="d" style="left:465px;top:64px"></i>
<i class="d" style="left:473px;top:64px"></i>
<i class="d" style="left:484px;top:64px"></i>
<i class="d" style="left:492px;top:64px"></i>
<i class="d" style="left:500px;top:64px"></i>
<i class="d" style="left:530px;top:64px"></i>
<i class="d" style="left:538px;top:64px"></i>
<i class="d" style="left:568px;top:64px"></i>
<i class="d" style="left:576px;top:64px"></i>
<i class="d" style="left:606px;top:64px"></i>
<i class="d" style="left:615px;top:64px"></i>
<i class="d" style="left:623px;top:64px"></i>
<span class="t n" style="left:11px;top:68px;color:#fff;">17</span>
<span class="t n" style="left:30px;top:68px;color:#0f0;">B</span>
<span class="t n w" style="left:38px;top:68px;color:#0f0;">-</span>
<span class="t n" style="left:46px;top:68px;color:#0f0;">4</span>
<i class="d" style="left:80px;top:72px"></i>
<span class="t n" style="left:85px;top:68px;color:#0f0;">7</span>
<i class="d" style="left:118px;top:72px"></i>
<i class="d" style="left:126px;top:72px"></i>
<i class="d" style="left:156px;top:72px"></i>
<i class="d" style="left:165px;top:72px"></i>
<i class="d" style="left:173px;top:72px"></i>
<i class="d" style="left:184px;top:72px"></i>
<i class="d" style="left:192px;top:72px"></i>
<i class="d" style="left:200px;top:72px"></i>
<i class="d" style="left:230px;top:72px"></i>
<i class="d" style="left:238px;top:72px"></i>
<i class="d" style="left:268px;top:72px"></i>
<i class="d" style="left:276px;top:72px"></i>
<i class="d" style="left:306px;top:72px"></i>
<i class="d" style="left:315px;top:72px"></i>
<i class="d" style="left:323px;top:72px"></i>
<i class="d" style="left:334px;top:72px"></i>
<i class="d" style="left:342px;top:72px"></i>
<i class="d" style="left:350px;top:72px"></i>
<i class="d" style="left:380px;top:72px"></i>
<i class="d" style="left:388px;top:72px"></i>
<i class="d" style="left:418px;top:72px"></i>
<i class="d" style="left:426px;top:72px"></i>
<i class="d" style="left:456px;top:72px"></i>
<i class="d" style="left:465px;top:72px"></i>
<i class="d" style="left:473px;top:72px"></i>
<i class="d" style="left:484px;top:72px"></i>
<i class="d" style="left:492px;top:72px"></i>
<i class="d" style="left:500px;top:72px"></i>
<i class="d" style="left:530px;top:72px"></i>
<i class="d" style="left:538px;top:72px"></i>
<i class="d" style="left:568px;top:72px"></i>
<i class="d" style="left:576px;top:72px"></i>
<i class="d" style="left:606px;top:72px"></i>
<i class="d" style="left:615px;top:72px"></i>
<i class="d" style="left:623px;top:72px"></i>
<div style="left:10px;top:76px;width:617px;height:8px;background:#333;"></div>
<span class="t n" style="left:11px;top:76px;color:#ff0;">18</span>
<span class="t n" style="left:30px;top:76px;color:#0f0;">G</span>
<span class="t n w" style="left:38px;top:76px;color:#0f0;">-</span>
<span class="t n" style="left:46px;top:76px;color:#0f0;">4</span>
<i class="d" style="left:80px;top:80px"></i>
<span class="t n" style="left:85px;top:76px;color:#0f0;">7</span>
<i class="d" style="left:118px;top:80px"></i>
<i class="d" style="left:126px;top:80px"></i>
<i class="d" style="left:156px;top:80px"></i>
<i class="d" style="left:165px;top:80px"></i>
<i class="d" style="left:173px;top:80px"></i>
<i class="d" style="left:184px;top:80px"></i>
<i class="d" style="left:192px;top:80px"></i>
<i class="d" style="left:200px;top:80px"></i>
<i class="d" style="left:230px;top:80px"></i>
<i class="d" style="left:238px;top:80px"></i>
<i class="d" style="left:268px;top:80px"></i>
<i class="d" style="left:276px;top:80px"></i>
<i class="d" style="left:306px;top:80px"></i>
<i class="d" style="left:315px;top:80px"></i>
<i class="d" style="left:323px;top:80px"></i>
<span class="t n" style="left:330px;top:76px;color:#0f0;">G</span>
<span class="t n w" style="left:338px;top:76px;color:#0f0;">-</span>
<span class="t n" style="left:346px;top:76px;color:#0f0;">5</span>
<i class="d" style="left:380px;top:80px"></i>
<span class="t n" style="left:385px;top:76px;color:#0f0;">8</span>
<i class="d" style="left:418px;top:80px"></i>
<i class="d" style="left:426px;top:80px"></i>
<i class="d" style="left:456px;top:80px"></i>
<i class="d" style="left:465px;top:80px"></i>
<i class="d" style="left:473px;top:80px"></i>
<i class="d" style="left:484px;top:80px"></i>
<i class="d" style="left:492px;top:80px"></i>
<i class="d" style="left:500px;top:80px"></i>
<i class="d" style="left:530px;top:80px"></i>
<i class="d" style="left:538px;top:80px"></i>
<i class="d" style="left:568px;top:80px"></i>
<i class="d" style="left:576px;top:80px"></i>
<i class="d" style="left:606px;top:80px"></i>
<i class="d" style="left:615px;top:80px"></i>
<i class="d" style="left:623px;top:80px"></i>
<span class="t n" style="left:11px;top:84px;color:#fff;">19</span>
<span class="t n" style="left:30px;top:84px;color:#0f0;">D</span>
<span class="t n w" style="left:38px;top:84px;color:#0f0;">-</span>
<span class="t n" style="left:46px;top:84px;color:#0f0;">5</span>
<i class="d" style="left:80px;top:88px"></i>
<span class="t n" style="left:85px;top:84px;color:#0f0;">7</span>
<i class="d" style="left:118px;top:88px"></i>
<i class="d" style="left:126px;top:88px"></i>
<i class="d" style="left:156px;top:88px"></i>
<i class="d" style="left:165px;top:88px"></i>
<i class="d" style="left:173px;top:88px"></i>
<i class="d" style="left:184px;top:88px"></i>
<i class="d" style="left:192px;top:88px"></i>
<i class="d" style="left:200px;top:88px"></i>
<i class="d" style="left:230px;top:88px"></i>
<i class="d" style="left:238px;top:88px"></i>
<i class="d" style="left:268px;top:88px"></i>
<i class="d" style="left:276px;top:88px"></i>
<i class="d" style="left:306px;top:88px"></i>
<i class="d" style="left:315px;top:88px"></i>
<i class="d" style="left:323px;top:88px"></i>
<i class="d" style="left:334px;top:88px"></i>
<i class="d" style="left:342px;top:88px"></i>
<i class="d" style="left:350px;top:88px"></i>
<i class="d" style="left:380px;top:88px"></i>
<i class="d" style="left:388px;top:88px"></i>
<i class="d" style="left:418px;top:88px"></i>
<i class="d" style="left:426px;top:88px"></i>
<i class="d" style="left:456px;top:88px"></i>
<i class="d" style="left:465px;top:88px"></i>
<i class="d" style="left:473px;top:88px"></i>
<i class="d" style="left:484px;top:88px"></i>
<i class="d" style="left:492px;top:88px"></i>
<i class="d" style="left:500px;top:88px"></i>
<i class="d" style="left:530px;top:88px"></i>
<i class="d" style="left:538px;top:88px"></i>
<i class="d" style="left:568px;top:88px"></i>
<i class="d" style="left:576px;top:88px"></i>
<i class="d" style="left:606px;top:88px"></i>
<i class="d" style="left:615px;top:88px"></i>
<i class="d" style="left:623px;top:88px"></i>
<span class="t n" style="left:11px;top:92px;color:#fff;">1A</span>
<span class="t n" style="left:30px;top:92px;color:#0f0;">B</span>
<span class="t n w" style="left:38px;top:92px;color:#0f0;">-</span>
<span class="t n" style="left:46px;top:92px;color:#0f0;">4</span>
<i class="d" style="left:80px;top:96px"></i>
<span class="t n" style="left:85px;top:92px;color:#0f0;">7</span>
<i class="d" style="left:118px;top:96px"></i>
<i class="d" style="left:126px;top:96px"></i>
<i class="d" style="left:156px;top:96px"></i>
<i class="d" style="left:165px;top:96px"></i>
<i class="d" style="left:173px;top:96px"></i>
<i class="d" style="left:184px;top:96px"></i>
<i class="d" style="left:192px;top:96px"></i>
<i class="d" style="left:200px;top:96px"></i>
<i class="d" style="left:230px;top:96px"></i>
<i class="d" style="left:238px;top:96px"></i>
<i class="d" style="left:268px;top:96px"></i>
<i class="d" style="left:276px;top:96px"></i>
<i class="d" style="left:306px;top:96px"></i>
<i class="d" style="left:315px;top:96px"></i>
<i class="d" style="left:323px;top:96px"></i>
<span class="t n" style="left:330px;top:92px;color:#0f0;">G</span>
<span class="t n w" style="left:338px;top:92px;color:#0f0;">-</span>
<span class="t n" style="left:346px;top:92px;color:#0f0;">5</span>
<i class="d" style="left:380px;top:96px"></i>
<span class="t n" style="left:385px;top:92px;color:#0f0;">8</span>
<i class="d" style="left:418px;top:96px"></i>
<i class="d" style="left:426px;top:96px"></i>
<i class="d" style="left:456px;top:96px"></i>
<i class="d" style="left:465px;top:96px"></i>
<i class="d" style="left:473px;top:96px"></i>
<i class="d" style="left:484px;top:96px"></i>
<i class="d" style="left:492px;top:96px"></i>
<i class="d" style="left:500px;top:96px"></i>
<i class="d" style="left:530px;top:96px"></i>
<i class="d" style="left:538px;top:96px"></i>
<i class="d" style="left:568px;top:96px"></i>
<i class="d" style="left:576px;top:96px"></i>
<i class="d" style="left:606px;top:96px"></i>
<i class="d" style="left:615px;top:96px"></i>
<i class="d" style="left:623px;top:96px"></i>
<span class="t n" style="left:11px;top:100px;color:#fff;">1B</span>
<span class="t n" style="left:30px;top:100px;color:#0f0;">G</span>
<span class="t n w" style="left:38px;top:100px;color:#0f0;">-</span>
<span class="t n" style="left:46px;top:100px;color:#0f0;">4</span>
<i class="d" style="left:80px;top:104px"></i>
<span class="t n" style="left:85px;top:100px;color:#0f0;">7</span>
<i class="d" style="left:118px;top:104px"></i>
<i class="d" style="left:126px;top:104px"></i>
<i class="d" style="left:156px;top:104px"></i>
<i class="d" style="left:165px;top:104px"></i>
<i class="d" style="left:173px;top:104px"></i>
<i class="d" style="left:184px;top:104px"></i>
<i class="d" style="left:192px;top:104px"></i>
<i class="d" style="left:200px;top:104px"></i>
<i class="d" style="left:230px;top:104px"></i>
<i class="d" style="left:238px;top:104px"></i>
<i class="d" style="left:268px;top:104px"></i>
<i class="d" style="left:276px;top:104px"></i>
<i class="d" style="left:306px;top:104px"></i>
<i class="d" style="left:315px;top:104px"></i>
<i class="d" style="left:323px;top:104px"></i>
<span class="t n" style="left:330px;top:100px;color:#0f0;">G</span>
<span class="t n w" style="left:338px;top:100px;color:#0f0;">-</span>
<span class="t n" style="left:346px;top:100px;color:#0f0;">4</span>
<i class="d" style="left:380px;top:104px"></i>
<span class="t n" style="left:385px;top:100px;color:#0f0;">8</span>
<i class="d" style="left:418px;top:104px"></i>
<i class="d" style="left:426px;top:104px"></i>
<i class="d" style="left:456px;top:104px"></i>
<i class="d" style="left:465px;top:104px"></i>
<i class="d" style="left:473px;top:104px"></i>
<i class="d" style="left:484px;top:104px"></i>
<i class="d" style="left:492px;top:104px"></i>
<i class="d" style="left:500px;top:104px"></i>
<i class="d" style="left:530px;top:104px"></i>
<i class="d" style="left:538px;top:104px"></i>
<i class="d" style="left:568px;top:104px"></i>
<i class="d" style="left:576px;top:104px"></i>
<i class="d" style="left:606px;top:104px"></i>
<i class="d" style="left:615px;top:104px"></i>
<i class="d" style="left:623px;top:104px"></i>
<div style="left:10px;top:108px;width:617px;height:8px;background:#333;"></div>
<span class="t n" style="left:11px;top:108px;color:#ff0;">1C</span>
<span class="t n" style="left:30px;top:108px;color:#0f0;">B</span>
<span class="t n w" style="left:38px;top:108px;color:#0f0;">-</span>
<span class="t n" style="left:46px;top:108px;color:#0f0;">4</span>
<i class="d" style="left:80px;top:112px"></i>
<span class="t n" style="left:85px;top:108px;color:#0f0;">7</span>
<i class="d" style="left:118px;top:112px"></i>
<i class="d" style="left:126px;top:112px"></i>
<i class="d" style="left:156px;top:112px"></i>
<i class="d" style="left:165px;top:112px"></i>
<i class="d" style="left:173px;top:112px"></i>
<i class="d" style="left:184px;top:112px"></i>
<i class="d" style="left:192px;top:112px"></i>
<i class="d" style="left:200px;top:112px"></i>
<i class="d" style="left:230px;top:112px"></i>
<i class="d" style="left:238px;top:112px"></i>
<i class="d" style="left:268px;top:112px"></i>
<i class="d" style="left:276px;top:112px"></i>
<i class="d" style="left:306px;top:112px"></i>
<i class="d" style="left:315px;top:112px"></i>
<i class="d" style="left:323px;top:112px"></i>
<span class="t n" style="left:330px;top:108px;color:#0f0;">D</span>
<span class="t n w" style="left:338px;top:108px;color:#0f0;">-</span>
<span class="t n" style="left:346px;top:108px;color:#0f0;">5</span>
<i class="d" style="left:380px;top:112px"></i>
<span class="t n" style="left:385px;top:108px;color:#0f0;">8</span>
<i class="d" style="left:418px;top:112px"></i>
<i class="d" style="left:426px;top:112px"></i>
<i class="d" style="left:456px;top:112px"></i>
<i class="d" style="left:465px;top:112px"></i>
<i class="d" style="left:473px;top:112px"></i>
<i class="d" style="left:484px;top:112px"></i>
<i class="d" style="left:492px;top:112px"></i>
<i class="d" style="left:500px;top:112px"></i>
<i class="d" style="left:530px;top:112px"></i>
<i class="d" style="left:538px;top:112px"></i>
<i class="d" style="left:568px;top:112px"></i>
<i class="d" style="left:576px;top:112px"></i>
<i class="d" style="left:606px;top:112px"></i>
<i class="d" style="left:615px;top:112px"></i>
<i class="d" style="left:623px;top:112px"></i>
<span class="t n" style="left:11px;top:116px;color:#fff;">1D</span>
<span class="t n" style="left:30px;top:116px;color:#0f0;">D</span>
<span class="t n w" style="left:38px;top:116px;color:#0f0;">-</span>
<span class="t n" style="left:46px;top:116px;color:#0f0;">5</span>
<i class="d" style="left:80px;top:120px"></i>
<span class="t n" style="left:85px;top:116px;color:#0f0;">7</span>
<i class="d" style="left:118px;top:120px"></i>
<i class="d" style="left:126px;top:120px"></i>
<i class="d" style="left:156px;top:120px"></i>
<i class="d" style="left:165px;top:120px"></i>
<i class="d" style="left:173px;top:120px"></i>
<i class="d" style="left:184px;top:120px"></i>
<i class="d" style="left:192px;top:120px"></i>
<i class="d" style="left:200px;top:120px"></i>
<i class="d" style="left:230px;top:120px"></i>
<i class="d" style="left:238px;top:120px"></i>
<i class="d" style="left:268px;top:120px"></i>
<i class="d" style="left:276px;top:120px"></i>
<i class="d" style="left:306px;top:120px"></i>
<i class="d" style="left:315px;top:120px"></i>
<i class="d" style="left:323px;top:120px"></i>
<i class="d" style="left:334px;top:120px"></i>
<i class="d" style="left:342px;top:120px"></i>
<i class="d" style="left:350px;top:120px"></i>
<i class="d" style="left:380px;top:120px"></i>
<i class="d" style="left:388px;top:120px"></i>
<i class="d" style="left:418px;top:120px"></i>
<i class="d" style="left:426px;top:120px"></i>
<i class="d" style="left:456px;top:120px"></i>
<i class="d" style="left:465px;top:120px"></i>
<i class="d" style="left:473px;top:120px"></i>
<i class="d" style="left:484px;top:120px"></i>
<i class="d" style="left:492px;top:120px"></i>
<i class="d" style="left:500px;top:120px"></i>
<i class="d" style="left:530px;top:120px"></i>
<i class="d" style="left:538px;top:120px"></i>
<i class="d" style="left:568px;top:120px"></i>
<i class="d" style="left:576px;top:120px"></i>
<i class="d" style="left:606px;top:120px"></i>
<i class="d" style="left:615px;top:120px"></i>
<i class="d" style="left:623px;top:120px"></i>
<span class="t n" style="left:11px;top:124px;color:#fff;">1E</span>
<span class="t n" style="left:30px;top:124px;color:#0f0;">B</span>
<span class="t n w" style="left:38px;top:124px;color:#0f0;">-</span>
<span class="t n" style="left:46px;top:124px;color:#0f0;">4</span>
<i class="d" style="left:80px;top:128px"></i>
<span class="t n" style="left:85px;top:124px;color:#0f0;">7</span>
<i class="d" style="left:118px;top:128px"></i>
<i class="d" style="left:126px;top:128px"></i>
<i class="d" style="left:156px;top:128px"></i>
<i class="d" style="left:165px;top:128px"></i>
<i class="d" style="left:173px;top:128px"></i>
<i class="d" style="left:184px;top:128px"></i>
<i class="d" style="left:192px;top:128px"></i>
<i class="d" style="left:200px;top:128px"></i>
<i class="d" style="left:230px;top:128px"></i>
<i class="d" style="left:238px;top:128px"></i>
<i class="d" style="left:268px;top:128px"></i>
<i class="d" style="left:276px;top:128px"></i>
<i class="d" style="left:306px;top:128px"></i>
<i class="d" style="left:315px;top:128px"></i>
<i class="d" style="left:323px;top:128px"></i>
<span class="t n" style="left:330px;top:124px;color:#0f0;">G</span>
<span class="t n w" style="left:338px;top:124px;color:#0f0;">-</span>
<span class="t n" style="left:346px;top:124px;color:#0f0;">5</span>
<i class="d" style="left:380px;top:128px"></i>
<span class="t n" style="left:385px;top:124px;color:#0f0;">8</span>
<i class="d" style="left:418px;top:128px"></i>
<i class="d" style="left:426px;top:128px"></i>
<i class="d" style="left:456px;top:128px"></i>
<i class="d" style="left:465px;top:128px"></i>
<i class="d" style="left:473px;top:128px"></i>
<i class="d" style="left:484px;top:128px"></i>
<i class="d" style="left:492px;top:128px"></i>
<i class="d" style="left:500px;top:128px"></i>
<i class="d" style="left:530px;top:128px"></i>
<i class="d" style="left:538px;top:128px"></i>
<i class="d" style="left:568px;top:128px"></i>
<i class="d" style="left:576px;top:128px"></i>
<i class="d" style="left:606px;top:128px"></i>
<i class="d" style="left:615px;top:128px"></i>
<i class="d" style="left:623px;top:128px"></i>
<span class="t n" style="left:11px;top:132px;color:#fff;">1F</span>
<span class="t n" style="left:30px;top:132px;color:#0f0;">G</span>
<span class="t n w" style="left:38px;top:132px;color:#0f0;">-</span>
<span class="t n" style="left:46px;top:132px;color:#0f0;">4</span>
<i class="d" style="left:80px;top:136px"></i>
<span class="t n" style="left:85px;top:132px;color:#0f0;">7</span>
<i class="d" style="left:118px;top:136px"></i>
<i class="d" style="left:126px;top:136px"></i>
<i class="d" style="left:156px;top:136px"></i>
<i class="d" style="left:165px;top:136px"></i>
<i class="d" style="left:173px;top:136px"></i>
<i class="d" style="left:184px;top:136px"></i>
<i class="d" style="left:192px;top:136px"></i>
<i class="d" style="left:200px;top:136px"></i>
<i class="d" style="left:230px;top:136px"></i>
<i class="d" style="left:238px;top:136px"></i>
<i class="d" style="left:268px;top:136px"></i>
<i class="d" style="left:276px;top:136px"></i>
<i class="d" style="left:306px;top:136px"></i>
<i class="d" style="left:315px;top:136px"></i>
<i class="d" style="left:323px;top:136px"></i>
<span class="t n" style="left:330px;top:132px;color:#0f0;">G</span>
<span class="t n w" style="left:338px;top:132px;color:#0f0;">-</span>
<span class="t n" style="left:346px;top:132px;color:#0f0;">4</span>
<i class="d" style="left:380px;top:136px"></i>
<span class="t n" style="left:385px;top:132px;color:#0f0;">8</span>
<i class="d" style="left:418px;top:136px"></i>
<i class="d" style="left:426px;top:136px"></i>
<i class="d" style="left:456px;top:136px"></i>
<i class="d" style="left:465px;top:136px"></i>
<i class="d" style="left:473px;top:136px"></i>
<i class="d" style="left:484px;top:136px"></i>
<i class="d" style="left:492px;top:136px"></i>
<i class="d" style="left:500px;top:136px"></i>
<i class="d" style="left:530px;top:136px"></i>
<i class="d" style="left:538px;top:136px"></i>
<i class="d" style="left:568px;top:136px"></i>
<i class="d" style="left:576px;top:136px"></i>
<i class="d" style="left:606px;top:136px"></i>
<i class="d" style="left:615px;top:136px"></i>
<i class="d" style="left:623px;top:136px"></i>
<div style="left:10px;top:140px;width:617px;height:8px;background:#333;"></div>
<span class="t n" style="left:11px;top:140px;color:#ff0;">20</span>
<span class="t n" style="left:30px;top:140px;color:#0f0;">C</span>
<span class="t n w" style="left:38px;top:140px;color:#0f0;">-</span>
<span class="t n" style="left:46px;top:140px;color:#0f0;">5</span>
<i class="d" style="left:80px;top:144px"></i>
<span class="t n" style="left:85px;top:140px;color:#0f0;">7</span>
<i class="d" style="left:118px;top:144px"></i>
<i class="d" style="left:126px;top:144px"></i>
<i class="d" style="left:156px;top:144px"></i>
<i class="d" style="left:165px;top:144px"></i>
<i class="d" style="left:173px;top:144px"></i>
<span class="t n" style="left:180px;top:140px;color:#0f0;">F</span>
<span class="t n w" style="left:188px;top:140px;color:#0f0;">-</span>
<span class="t n" style="left:196px;top:140px;color:#0f0;">4</span>
<i class="d" style="left:230px;top:144px"></i>
<span class="t n" style="left:235px;top:140px;color:#0f0;">3</span>
<i class="d" style="left:268px;top:144px"></i>
<i class="d" style="left:276px;top:144px"></i>
<i class="d" style="left:306px;top:144px"></i>
<i class="d" style="left:315px;top:144px"></i>
<i class="d" style="left:323px;top:144px"></i>
<span class="t n" style="left:330px;top:140px;color:#0f0;">F</span>
<span class="t n w" style="left:338px;top:140px;color:#0f0;">-</span>
<span class="t n" style="left:346px;top:140px;color:#0f0;">5</span>
<i class="d" style="left:380px;top:144px"></i>
<span class="t n" style="left:385px;top:140px;color:#0f0;">8</span>
<i class="d" style="left:418px;top:144px"></i>
<i class="d" style="left:426px;top:144px"></i>
<i class="d" style="left:456px;top:144px"></i>
<i class="d" style="left:465px;top:144px"></i>
<i class="d" style="left:473px;top:144px"></i>
<span class="t n" style="left:480px;top:140px;color:#0f0;">F</span>
<span class="t n w" style="left:488px;top:140px;color:#0f0;">-</span>
<span class="t n" style="left:496px;top:140px;color:#0f0;">5</span>
<i class="d" style="left:530px;top:144px"></i>
<span class="t n" style="left:535px;top:140px;color:#0f0;">1</span>
<i class="d" style="left:568px;top:144px"></i>
<i class="d" style="left:576px;top:144px"></i>
<i class="d" style="left:606px;top:144px"></i>
<i class="d" style="left:615px;top:144px"></i>
<i class="d" style="left:623px;top:144px"></i>
<div style="left:10px;top:147px;width:617px;height:10px;background:#405a84;box-shadow:inset 0 1px 0 #5272a0,inset 0 -1px 0 #344a6e"></div>
<div style="left:30px;top:147px;width:25px;height:10px;background:#8c8c8c;"></div>
<span class="t n" style="left:11px;top:148px;color:#fff;">21</span>
<span class="t n" style="left:30px;top:148px;color:#0f0;">A</span>
<span class="t n w" style="left:38px;top:148px;color:#0f0;">-</span>
<span class="t n" style="left:46px;top:148px;color:#0f0;">4</span>
<i class="d" style="left:80px;top:152px"></i>
<span class="t n" style="left:85px;top:148px;color:#0f0;">7</span>
<i class="d" style="left:118px;top:152px"></i>
<i class="d" style="left:126px;top:152px"></i>
<i class="d" style="left:156px;top:152px"></i>
<i class="d" style="left:165px;top:152px"></i>
<i class="d" style="left:173px;top:152px"></i>
<i class="d" style="left:184px;top:152px"></i>
<i class="d" style="left:192px;top:152px"></i>
<i class="d" style="left:200px;top:152px"></i>
<i class="d" style="left:230px;top:152px"></i>
<i class="d" style="left:238px;top:152px"></i>
<i class="d" style="left:268px;top:152px"></i>
<i class="d" style="left:276px;top:152px"></i>
<i class="d" style="left:306px;top:152px"></i>
<i class="d" style="left:315px;top:152px"></i>
<i class="d" style="left:323px;top:152px"></i>
<i class="d" style="left:334px;top:152px"></i>
<i class="d" style="left:342px;top:152px"></i>
<i class="d" style="left:350px;top:152px"></i>
<i class="d" style="left:380px;top:152px"></i>
<i class="d" style="left:388px;top:152px"></i>
<i class="d" style="left:418px;top:152px"></i>
<i class="d" style="left:426px;top:152px"></i>
<i class="d" style="left:456px;top:152px"></i>
<i class="d" style="left:465px;top:152px"></i>
<i class="d" style="left:473px;top:152px"></i>
<i class="d" style="left:484px;top:152px"></i>
<i class="d" style="left:492px;top:152px"></i>
<i class="d" style="left:500px;top:152px"></i>
<i class="d" style="left:530px;top:152px"></i>
<i class="d" style="left:538px;top:152px"></i>
<i class="d" style="left:568px;top:152px"></i>
<i class="d" style="left:576px;top:152px"></i>
<i class="d" style="left:606px;top:152px"></i>
<i class="d" style="left:615px;top:152px"></i>
<i class="d" style="left:623px;top:152px"></i>
<span class="t n" style="left:11px;top:156px;color:#fff;">22</span>
<span class="t n" style="left:30px;top:156px;color:#0f0;">F</span>
<span class="t n w" style="left:38px;top:156px;color:#0f0;">-</span>
<span class="t n" style="left:46px;top:156px;color:#0f0;">4</span>
<i class="d" style="left:80px;top:160px"></i>
<span class="t n" style="left:85px;top:156px;color:#0f0;">7</span>
<i class="d" style="left:118px;top:160px"></i>
<i class="d" style="left:126px;top:160px"></i>
<i class="d" style="left:156px;top:160px"></i>
<i class="d" style="left:165px;top:160px"></i>
<i class="d" style="left:173px;top:160px"></i>
<i class="d" style="left:184px;top:160px"></i>
<i class="d" style="left:192px;top:160px"></i>
<i class="d" style="left:200px;top:160px"></i>
<i class="d" style="left:230px;top:160px"></i>
<i class="d" style="left:238px;top:160px"></i>
<i class="d" style="left:268px;top:160px"></i>
<i class="d" style="left:276px;top:160px"></i>
<i class="d" style="left:306px;top:160px"></i>
<i class="d" style="left:315px;top:160px"></i>
<i class="d" style="left:323px;top:160px"></i>
<span class="t n" style="left:330px;top:156px;color:#0f0;">F</span>
<span class="t n w" style="left:338px;top:156px;color:#0f0;">-</span>
<span class="t n" style="left:346px;top:156px;color:#0f0;">5</span>
<i class="d" style="left:380px;top:160px"></i>
<span class="t n" style="left:385px;top:156px;color:#0f0;">8</span>
<i class="d" style="left:418px;top:160px"></i>
<i class="d" style="left:426px;top:160px"></i>
<i class="d" style="left:456px;top:160px"></i>
<i class="d" style="left:465px;top:160px"></i>
<i class="d" style="left:473px;top:160px"></i>
<i class="d" style="left:484px;top:160px"></i>
<i class="d" style="left:492px;top:160px"></i>
<i class="d" style="left:500px;top:160px"></i>
<i class="d" style="left:530px;top:160px"></i>
<i class="d" style="left:538px;top:160px"></i>
<i class="d" style="left:568px;top:160px"></i>
<i class="d" style="left:576px;top:160px"></i>
<i class="d" style="left:606px;top:160px"></i>
<i class="d" style="left:615px;top:160px"></i>
<i class="d" style="left:623px;top:160px"></i>
<span class="t n" style="left:11px;top:164px;color:#fff;">23</span>
<span class="t n" style="left:30px;top:164px;color:#0f0;">C</span>
<span class="t n w" style="left:38px;top:164px;color:#0f0;">-</span>
<span class="t n" style="left:46px;top:164px;color:#0f0;">5</span>
<i class="d" style="left:80px;top:168px"></i>
<span class="t n" style="left:85px;top:164px;color:#0f0;">7</span>
<i class="d" style="left:118px;top:168px"></i>
<i class="d" style="left:126px;top:168px"></i>
<i class="d" style="left:156px;top:168px"></i>
<i class="d" style="left:165px;top:168px"></i>
<i class="d" style="left:173px;top:168px"></i>
<i class="d" style="left:184px;top:168px"></i>
<i class="d" style="left:192px;top:168px"></i>
<i class="d" style="left:200px;top:168px"></i>
<i class="d" style="left:230px;top:168px"></i>
<i class="d" style="left:238px;top:168px"></i>
<i class="d" style="left:268px;top:168px"></i>
<i class="d" style="left:276px;top:168px"></i>
<i class="d" style="left:306px;top:168px"></i>
<i class="d" style="left:315px;top:168px"></i>
<i class="d" style="left:323px;top:168px"></i>
<span class="t n" style="left:330px;top:164px;color:#0f0;">F</span>
<span class="t n w" style="left:338px;top:164px;color:#0f0;">-</span>
<span class="t n" style="left:346px;top:164px;color:#0f0;">4</span>
<i class="d" style="left:380px;top:168px"></i>
<span class="t n" style="left:385px;top:164px;color:#0f0;">8</span>
<i class="d" style="left:418px;top:168px"></i>
<i class="d" style="left:426px;top:168px"></i>
<i class="d" style="left:456px;top:168px"></i>
<i class="d" style="left:465px;top:168px"></i>
<i class="d" style="left:473px;top:168px"></i>
<i class="d" style="left:484px;top:168px"></i>
<i class="d" style="left:492px;top:168px"></i>
<i class="d" style="left:500px;top:168px"></i>
<i class="d" style="left:530px;top:168px"></i>
<i class="d" style="left:538px;top:168px"></i>
<i class="d" style="left:568px;top:168px"></i>
<i class="d" style="left:576px;top:168px"></i>
<i class="d" style="left:606px;top:168px"></i>
<i class="d" style="left:615px;top:168px"></i>
<i class="d" style="left:623px;top:168px"></i>
<div style="left:10px;top:172px;width:617px;height:8px;background:#333;"></div>
<span class="t n" style="left:11px;top:172px;color:#ff0;">24</span>
<span class="t n" style="left:30px;top:172px;color:#0f0;">A</span>
<span class="t n w" style="left:38px;top:172px;color:#0f0;">-</span>
<span class="t n" style="left:46px;top:172px;color:#0f0;">4</span>
<i class="d" style="left:80px;top:176px"></i>
<span class="t n" style="left:85px;top:172px;color:#0f0;">7</span>
<i class="d" style="left:118px;top:176px"></i>
<i class="d" style="left:126px;top:176px"></i>
<i class="d" style="left:156px;top:176px"></i>
<i class="d" style="left:165px;top:176px"></i>
<i class="d" style="left:173px;top:176px"></i>
<i class="d" style="left:184px;top:176px"></i>
<i class="d" style="left:192px;top:176px"></i>
<i class="d" style="left:200px;top:176px"></i>
<i class="d" style="left:230px;top:176px"></i>
<i class="d" style="left:238px;top:176px"></i>
<i class="d" style="left:268px;top:176px"></i>
<i class="d" style="left:276px;top:176px"></i>
<i class="d" style="left:306px;top:176px"></i>
<i class="d" style="left:315px;top:176px"></i>
<i class="d" style="left:323px;top:176px"></i>
<span class="t n" style="left:330px;top:172px;color:#0f0;">C</span>
<span class="t n w" style="left:338px;top:172px;color:#0f0;">-</span>
<span class="t n" style="left:346px;top:172px;color:#0f0;">5</span>
<i class="d" style="left:380px;top:176px"></i>
<span class="t n" style="left:385px;top:172px;color:#0f0;">8</span>
<i class="d" style="left:418px;top:176px"></i>
<i class="d" style="left:426px;top:176px"></i>
<i class="d" style="left:456px;top:176px"></i>
<i class="d" style="left:465px;top:176px"></i>
<i class="d" style="left:473px;top:176px"></i>
<i class="d" style="left:484px;top:176px"></i>
<i class="d" style="left:492px;top:176px"></i>
<i class="d" style="left:500px;top:176px"></i>
<i class="d" style="left:530px;top:176px"></i>
<i class="d" style="left:538px;top:176px"></i>
<i class="d" style="left:568px;top:176px"></i>
<i class="d" style="left:576px;top:176px"></i>
<i class="d" style="left:606px;top:176px"></i>
<i class="d" style="left:615px;top:176px"></i>
<i class="d" style="left:623px;top:176px"></i>
<span class="t n" style="left:11px;top:180px;color:#fff;">25</span>
<span class="t n" style="left:30px;top:180px;color:#0f0;">F</span>
<span class="t n w" style="left:38px;top:180px;color:#0f0;">-</span>
<span class="t n" style="left:46px;top:180px;color:#0f0;">4</span>
<i class="d" style="left:80px;top:184px"></i>
<span class="t n" style="left:85px;top:180px;color:#0f0;">7</span>
<i class="d" style="left:118px;top:184px"></i>
<i class="d" style="left:126px;top:184px"></i>
<i class="d" style="left:156px;top:184px"></i>
<i class="d" style="left:165px;top:184px"></i>
<i class="d" style="left:173px;top:184px"></i>
<i class="d" style="left:184px;top:184px"></i>
<i class="d" style="left:192px;top:184px"></i>
<i class="d" style="left:200px;top:184px"></i>
<i class="d" style="left:230px;top:184px"></i>
<i class="d" style="left:238px;top:184px"></i>
<i class="d" style="left:268px;top:184px"></i>
<i class="d" style="left:276px;top:184px"></i>
<i class="d" style="left:306px;top:184px"></i>
<i class="d" style="left:315px;top:184px"></i>
<i class="d" style="left:323px;top:184px"></i>
<i class="d" style="left:334px;top:184px"></i>
<i class="d" style="left:342px;top:184px"></i>
<i class="d" style="left:350px;top:184px"></i>
<i class="d" style="left:380px;top:184px"></i>
<i class="d" style="left:388px;top:184px"></i>
<i class="d" style="left:418px;top:184px"></i>
<i class="d" style="left:426px;top:184px"></i>
<i class="d" style="left:456px;top:184px"></i>
<i class="d" style="left:465px;top:184px"></i>
<i class="d" style="left:473px;top:184px"></i>
<i class="d" style="left:484px;top:184px"></i>
<i class="d" style="left:492px;top:184px"></i>
<i class="d" style="left:500px;top:184px"></i>
<i class="d" style="left:530px;top:184px"></i>
<i class="d" style="left:538px;top:184px"></i>
<i class="d" style="left:568px;top:184px"></i>
<i class="d" style="left:576px;top:184px"></i>
<i class="d" style="left:606px;top:184px"></i>
<i class="d" style="left:615px;top:184px"></i>
<i class="d" style="left:623px;top:184px"></i>
<span class="t n" style="left:11px;top:188px;color:#fff;">26</span>
<span class="t n" style="left:30px;top:188px;color:#0f0;">C</span>
<span class="t n w" style="left:38px;top:188px;color:#0f0;">-</span>
<span class="t n" style="left:46px;top:188px;color:#0f0;">5</span>
<i class="d" style="left:80px;top:192px"></i>
<span class="t n" style="left:85px;top:188px;color:#0f0;">7</span>
<i class="d" style="left:118px;top:192px"></i>
<i class="d" style="left:126px;top:192px"></i>
<i class="d" style="left:156px;top:192px"></i>
<i class="d" style="left:165px;top:192px"></i>
<i class="d" style="left:173px;top:192px"></i>
<i class="d" style="left:184px;top:192px"></i>
<i class="d" style="left:192px;top:192px"></i>
<i class="d" style="left:200px;top:192px"></i>
<i class="d" style="left:230px;top:192px"></i>
<i class="d" style="left:238px;top:192px"></i>
<i class="d" style="left:268px;top:192px"></i>
<i class="d" style="left:276px;top:192px"></i>
<i class="d" style="left:306px;top:192px"></i>
<i class="d" style="left:315px;top:192px"></i>
<i class="d" style="left:323px;top:192px"></i>
<span class="t n" style="left:330px;top:188px;color:#0f0;">E</span>
<span class="t n w" style="left:338px;top:188px;color:#0f0;">-</span>
<span class="t n" style="left:346px;top:188px;color:#0f0;">5</span>
<i class="d" style="left:380px;top:192px"></i>
<span class="t n" style="left:385px;top:188px;color:#0f0;">8</span>
<i class="d" style="left:418px;top:192px"></i>
<i class="d" style="left:426px;top:192px"></i>
<i class="d" style="left:456px;top:192px"></i>
<i class="d" style="left:465px;top:192px"></i>
<i class="d" style="left:473px;top:192px"></i>
<i class="d" style="left:484px;top:192px"></i>
<i class="d" style="left:492px;top:192px"></i>
<i class="d" style="left:500px;top:192px"></i>
<i class="d" style="left:530px;top:192px"></i>
<i class="d" style="left:538px;top:192px"></i>
<i class="d" style="left:568px;top:192px"></i>
<i class="d" style="left:576px;top:192px"></i>
<i class="d" style="left:606px;top:192px"></i>
<i class="d" style="left:615px;top:192px"></i>
<i class="d" style="left:623px;top:192px"></i>
<span class="t n" style="left:11px;top:196px;color:#fff;">27</span>
<span class="t n" style="left:30px;top:196px;color:#0f0;">A</span>
<span class="t n w" style="left:38px;top:196px;color:#0f0;">-</span>
<span class="t n" style="left:46px;top:196px;color:#0f0;">4</span>
<i class="d" style="left:80px;top:200px"></i>
<span class="t n" style="left:85px;top:196px;color:#0f0;">7</span>
<i class="d" style="left:118px;top:200px"></i>
<i class="d" style="left:126px;top:200px"></i>
<i class="d" style="left:156px;top:200px"></i>
<i class="d" style="left:165px;top:200px"></i>
<i class="d" style="left:173px;top:200px"></i>
<i class="d" style="left:184px;top:200px"></i>
<i class="d" style="left:192px;top:200px"></i>
<i class="d" style="left:200px;top:200px"></i>
<i class="d" style="left:230px;top:200px"></i>
<i class="d" style="left:238px;top:200px"></i>
<i class="d" style="left:268px;top:200px"></i>
<i class="d" style="left:276px;top:200px"></i>
<i class="d" style="left:306px;top:200px"></i>
<i class="d" style="left:315px;top:200px"></i>
<i class="d" style="left:323px;top:200px"></i>
<i class="d" style="left:334px;top:200px"></i>
<i class="d" style="left:342px;top:200px"></i>
<i class="d" style="left:350px;top:200px"></i>
<i class="d" style="left:380px;top:200px"></i>
<i class="d" style="left:388px;top:200px"></i>
<i class="d" style="left:418px;top:200px"></i>
<i class="d" style="left:426px;top:200px"></i>
<i class="d" style="left:456px;top:200px"></i>
<i class="d" style="left:465px;top:200px"></i>
<i class="d" style="left:473px;top:200px"></i>
<i class="d" style="left:484px;top:200px"></i>
<i class="d" style="left:492px;top:200px"></i>
<i class="d" style="left:500px;top:200px"></i>
<i class="d" style="left:530px;top:200px"></i>
<i class="d" style="left:538px;top:200px"></i>
<i class="d" style="left:568px;top:200px"></i>
<i class="d" style="left:576px;top:200px"></i>
<i class="d" style="left:606px;top:200px"></i>
<i class="d" style="left:615px;top:200px"></i>
<i class="d" style="left:623px;top:200px"></i>
<div style="left:10px;top:204px;width:617px;height:8px;background:#333;"></div>
<span class="t n" style="left:11px;top:204px;color:#ff0;">28</span>
<span class="t n" style="left:30px;top:204px;color:#0f0;">F</span>
<span class="t n w" style="left:38px;top:204px;color:#0f0;">-</span>
<span class="t n" style="left:46px;top:204px;color:#0f0;">4</span>
<i class="d" style="left:80px;top:208px"></i>
<span class="t n" style="left:85px;top:204px;color:#0f0;">7</span>
<i class="d" style="left:118px;top:208px"></i>
<i class="d" style="left:126px;top:208px"></i>
<i class="d" style="left:156px;top:208px"></i>
<i class="d" style="left:165px;top:208px"></i>
<i class="d" style="left:173px;top:208px"></i>
<i class="d" style="left:184px;top:208px"></i>
<i class="d" style="left:192px;top:208px"></i>
<i class="d" style="left:200px;top:208px"></i>
<i class="d" style="left:230px;top:208px"></i>
<i class="d" style="left:238px;top:208px"></i>
<i class="d" style="left:268px;top:208px"></i>
<i class="d" style="left:276px;top:208px"></i>
<i class="d" style="left:306px;top:208px"></i>
<i class="d" style="left:315px;top:208px"></i>
<i class="d" style="left:323px;top:208px"></i>
<span class="t n" style="left:330px;top:204px;color:#0f0;">F</span>
<span class="t n w" style="left:338px;top:204px;color:#0f0;">-</span>
<span class="t n" style="left:346px;top:204px;color:#0f0;">5</span>
<i class="d" style="left:380px;top:208px"></i>
<span class="t n" style="left:385px;top:204px;color:#0f0;">8</span>
<i class="d" style="left:418px;top:208px"></i>
<i class="d" style="left:426px;top:208px"></i>
<i class="d" style="left:456px;top:208px"></i>
<i class="d" style="left:465px;top:208px"></i>
<i class="d" style="left:473px;top:208px"></i>
<i class="d" style="left:484px;top:208px"></i>
<i class="d" style="left:492px;top:208px"></i>
<i class="d" style="left:500px;top:208px"></i>
<i class="d" style="left:530px;top:208px"></i>
<i class="d" style="left:538px;top:208px"></i>
<i class="d" style="left:568px;top:208px"></i>
<i class="d" style="left:576px;top:208px"></i>
<i class="d" style="left:606px;top:208px"></i>
<i class="d" style="left:615px;top:208px"></i>
<i class="d" style="left:623px;top:208px"></i>
<span class="t n" style="left:11px;top:212px;color:#fff;">29</span>
<span class="t n" style="left:30px;top:212px;color:#0f0;">C</span>
<span class="t n w" style="left:38px;top:212px;color:#0f0;">-</span>
<span class="t n" style="left:46px;top:212px;color:#0f0;">5</span>
<i class="d" style="left:80px;top:216px"></i>
<span class="t n" style="left:85px;top:212px;color:#0f0;">7</span>
<i class="d" style="left:118px;top:216px"></i>
<i class="d" style="left:126px;top:216px"></i>
<i class="d" style="left:156px;top:216px"></i>
<i class="d" style="left:165px;top:216px"></i>
<i class="d" style="left:173px;top:216px"></i>
<i class="d" style="left:184px;top:216px"></i>
<i class="d" style="left:192px;top:216px"></i>
<i class="d" style="left:200px;top:216px"></i>
<i class="d" style="left:230px;top:216px"></i>
<i class="d" style="left:238px;top:216px"></i>
<i class="d" style="left:268px;top:216px"></i>
<i class="d" style="left:276px;top:216px"></i>
<i class="d" style="left:306px;top:216px"></i>
<i class="d" style="left:315px;top:216px"></i>
<i class="d" style="left:323px;top:216px"></i>
<i class="d" style="left:334px;top:216px"></i>
<i class="d" style="left:342px;top:216px"></i>
<i class="d" style="left:350px;top:216px"></i>
<i class="d" style="left:380px;top:216px"></i>
<i class="d" style="left:388px;top:216px"></i>
<i class="d" style="left:418px;top:216px"></i>
<i class="d" style="left:426px;top:216px"></i>
<i class="d" style="left:456px;top:216px"></i>
<i class="d" style="left:465px;top:216px"></i>
<i class="d" style="left:473px;top:216px"></i>
<i class="d" style="left:484px;top:216px"></i>
<i class="d" style="left:492px;top:216px"></i>
<i class="d" style="left:500px;top:216px"></i>
<i class="d" style="left:530px;top:216px"></i>
<i class="d" style="left:538px;top:216px"></i>
<i class="d" style="left:568px;top:216px"></i>
<i class="d" style="left:576px;top:216px"></i>
<i class="d" style="left:606px;top:216px"></i>
<i class="d" style="left:615px;top:216px"></i>
<i class="d" style="left:623px;top:216px"></i>
<span class="t n" style="left:11px;top:220px;color:#fff;">2A</span>
<span class="t n" style="left:30px;top:220px;color:#0f0;">A</span>
<span class="t n w" style="left:38px;top:220px;color:#0f0;">-</span>
<span class="t n" style="left:46px;top:220px;color:#0f0;">4</span>
<i class="d" style="left:80px;top:224px"></i>
<span class="t n" style="left:85px;top:220px;color:#0f0;">7</span>
<i class="d" style="left:118px;top:224px"></i>
<i class="d" style="left:126px;top:224px"></i>
<i class="d" style="left:156px;top:224px"></i>
<i class="d" style="left:165px;top:224px"></i>
<i class="d" style="left:173px;top:224px"></i>
<i class="d" style="left:184px;top:224px"></i>
<i class="d" style="left:192px;top:224px"></i>
<i class="d" style="left:200px;top:224px"></i>
<i class="d" style="left:230px;top:224px"></i>
<i class="d" style="left:238px;top:224px"></i>
<i class="d" style="left:268px;top:224px"></i>
<i class="d" style="left:276px;top:224px"></i>
<i class="d" style="left:306px;top:224px"></i>
<i class="d" style="left:315px;top:224px"></i>
<i class="d" style="left:323px;top:224px"></i>
<span class="t n" style="left:330px;top:220px;color:#0f0;">F</span>
<span class="t n w" style="left:338px;top:220px;color:#0f0;">-</span>
<span class="t n" style="left:346px;top:220px;color:#0f0;">5</span>
<i class="d" style="left:380px;top:224px"></i>
<span class="t n" style="left:385px;top:220px;color:#0f0;">8</span>
<i class="d" style="left:418px;top:224px"></i>
<i class="d" style="left:426px;top:224px"></i>
<i class="d" style="left:456px;top:224px"></i>
<i class="d" style="left:465px;top:224px"></i>
<i class="d" style="left:473px;top:224px"></i>
<i class="d" style="left:484px;top:224px"></i>
<i class="d" style="left:492px;top:224px"></i>
<i class="d" style="left:500px;top:224px"></i>
<i class="d" style="left:530px;top:224px"></i>
<i class="d" style="left:538px;top:224px"></i>
<i class="d" style="left:568px;top:224px"></i>
<i class="d" style="left:576px;top:224px"></i>
<i class="d" style="left:606px;top:224px"></i>
<i class="d" style="left:615px;top:224px"></i>
<i class="d" style="left:623px;top:224px"></i>
<span class="t n" style="left:11px;top:228px;color:#fff;">2B</span>
<span class="t n" style="left:30px;top:228px;color:#0f0;">F</span>
<span class="t n w" style="left:38px;top:228px;color:#0f0;">-</span>
<span class="t n" style="left:46px;top:228px;color:#0f0;">4</span>
<i class="d" style="left:80px;top:232px"></i>
<span class="t n" style="left:85px;top:228px;color:#0f0;">7</span>
<i class="d" style="left:118px;top:232px"></i>
<i class="d" style="left:126px;top:232px"></i>
<i class="d" style="left:156px;top:232px"></i>
<i class="d" style="left:165px;top:232px"></i>
<i class="d" style="left:173px;top:232px"></i>
<i class="d" style="left:184px;top:232px"></i>
<i class="d" style="left:192px;top:232px"></i>
<i class="d" style="left:200px;top:232px"></i>
<i class="d" style="left:230px;top:232px"></i>
<i class="d" style="left:238px;top:232px"></i>
<i class="d" style="left:268px;top:232px"></i>
<i class="d" style="left:276px;top:232px"></i>
<i class="d" style="left:306px;top:232px"></i>
<i class="d" style="left:315px;top:232px"></i>
<i class="d" style="left:323px;top:232px"></i>
<span class="t n" style="left:330px;top:228px;color:#0f0;">F</span>
<span class="t n w" style="left:338px;top:228px;color:#0f0;">-</span>
<span class="t n" style="left:346px;top:228px;color:#0f0;">4</span>
<i class="d" style="left:380px;top:232px"></i>
<span class="t n" style="left:385px;top:228px;color:#0f0;">8</span>
<i class="d" style="left:418px;top:232px"></i>
<i class="d" style="left:426px;top:232px"></i>
<i class="d" style="left:456px;top:232px"></i>
<i class="d" style="left:465px;top:232px"></i>
<i class="d" style="left:473px;top:232px"></i>
<i class="d" style="left:484px;top:232px"></i>
<i class="d" style="left:492px;top:232px"></i>
<i class="d" style="left:500px;top:232px"></i>
<i class="d" style="left:530px;top:232px"></i>
<i class="d" style="left:538px;top:232px"></i>
<i class="d" style="left:568px;top:232px"></i>
<i class="d" style="left:576px;top:232px"></i>
<i class="d" style="left:606px;top:232px"></i>
<i class="d" style="left:615px;top:232px"></i>
<i class="d" style="left:623px;top:232px"></i>
<div style="left:10px;top:236px;width:617px;height:8px;background:#333;"></div>
<span class="t n" style="left:11px;top:236px;color:#ff0;">2C</span>
<span class="t n" style="left:30px;top:236px;color:#0f0;">A</span>
<span class="t n w" style="left:38px;top:236px;color:#0f0;">-</span>
<span class="t n" style="left:46px;top:236px;color:#0f0;">4</span>
<i class="d" style="left:80px;top:240px"></i>
<span class="t n" style="left:85px;top:236px;color:#0f0;">7</span>
<i class="d" style="left:118px;top:240px"></i>
<i class="d" style="left:126px;top:240px"></i>
<i class="d" style="left:156px;top:240px"></i>
<i class="d" style="left:165px;top:240px"></i>
<i class="d" style="left:173px;top:240px"></i>
<i class="d" style="left:184px;top:240px"></i>
<i class="d" style="left:192px;top:240px"></i>
<i class="d" style="left:200px;top:240px"></i>
<i class="d" style="left:230px;top:240px"></i>
<i class="d" style="left:238px;top:240px"></i>
<i class="d" style="left:268px;top:240px"></i>
<i class="d" style="left:276px;top:240px"></i>
<i class="d" style="left:306px;top:240px"></i>
<i class="d" style="left:315px;top:240px"></i>
<i class="d" style="left:323px;top:240px"></i>
<span class="t n" style="left:330px;top:236px;color:#0f0;">C</span>
<span class="t n w" style="left:338px;top:236px;color:#0f0;">-</span>
<span class="t n" style="left:346px;top:236px;color:#0f0;">5</span>
<i class="d" style="left:380px;top:240px"></i>
<span class="t n" style="left:385px;top:236px;color:#0f0;">8</span>
<i class="d" style="left:418px;top:240px"></i>
<i class="d" style="left:426px;top:240px"></i>
<i class="d" style="left:456px;top:240px"></i>
<i class="d" style="left:465px;top:240px"></i>
<i class="d" style="left:473px;top:240px"></i>
<i class="d" style="left:484px;top:240px"></i>
<i class="d" style="left:492px;top:240px"></i>
<i class="d" style="left:500px;top:240px"></i>
<i class="d" style="left:530px;top:240px"></i>
<i class="d" style="left:538px;top:240px"></i>
<i class="d" style="left:568px;top:240px"></i>
<i class="d" style="left:576px;top:240px"></i>
<i class="d" style="left:606px;top:240px"></i>
<i class="d" style="left:615px;top:240px"></i>
<i class="d" style="left:623px;top:240px"></i>
<span class="t n" style="left:11px;top:244px;color:#fff;">2D</span>
<span class="t n" style="left:30px;top:244px;color:#0f0;">C</span>
<span class="t n w" style="left:38px;top:244px;color:#0f0;">-</span>
<span class="t n" style="left:46px;top:244px;color:#0f0;">5</span>
<i class="d" style="left:80px;top:248px"></i>
<span class="t n" style="left:85px;top:244px;color:#0f0;">7</span>
<i class="d" style="left:118px;top:248px"></i>
<i class="d" style="left:126px;top:248px"></i>
<i class="d" style="left:156px;top:248px"></i>
<i class="d" style="left:165px;top:248px"></i>
<i class="d" style="left:173px;top:248px"></i>
<i class="d" style="left:184px;top:248px"></i>
<i class="d" style="left:192px;top:248px"></i>
<i class="d" style="left:200px;top:248px"></i>
<i class="d" style="left:230px;top:248px"></i>
<i class="d" style="left:238px;top:248px"></i>
<i class="d" style="left:268px;top:248px"></i>
<i class="d" style="left:276px;top:248px"></i>
<i class="d" style="left:306px;top:248px"></i>
<i class="d" style="left:315px;top:248px"></i>
<i class="d" style="left:323px;top:248px"></i>
<i class="d" style="left:334px;top:248px"></i>
<i class="d" style="left:342px;top:248px"></i>
<i class="d" style="left:350px;top:248px"></i>
<i class="d" style="left:380px;top:248px"></i>
<i class="d" style="left:388px;top:248px"></i>
<i class="d" style="left:418px;top:248px"></i>
<i class="d" style="left:426px;top:248px"></i>
<i class="d" style="left:456px;top:248px"></i>
<i class="d" style="left:465px;top:248px"></i>
<i class="d" style="left:473px;top:248px"></i>
<i class="d" style="left:484px;top:248px"></i>
<i class="d" style="left:492px;top:248px"></i>
<i class="d" style="left:500px;top:248px"></i>
<i class="d" style="left:530px;top:248px"></i>
<i class="d" style="left:538px;top:248px"></i>
<i class="d" style="left:568px;top:248px"></i>
<i class="d" style="left:576px;top:248px"></i>
<i class="d" style="left:606px;top:248px"></i>
<i class="d" style="left:615px;top:248px"></i>
<i class="d" style="left:623px;top:248px"></i>
<span class="t n" style="left:11px;top:252px;color:#fff;">2E</span>
<span class="t n" style="left:30px;top:252px;color:#0f0;">A</span>
<span class="t n w" style="left:38px;top:252px;color:#0f0;">-</span>
<span class="t n" style="left:46px;top:252px;color:#0f0;">4</span>
<i class="d" style="left:80px;top:256px"></i>
<span class="t n" style="left:85px;top:252px;color:#0f0;">7</span>
<i class="d" style="left:118px;top:256px"></i>
<i class="d" style="left:126px;top:256px"></i>
<i class="d" style="left:156px;top:256px"></i>
<i class="d" style="left:165px;top:256px"></i>
<i class="d" style="left:173px;top:256px"></i>
<i class="d" style="left:184px;top:256px"></i>
<i class="d" style="left:192px;top:256px"></i>
<i class="d" style="left:200px;top:256px"></i>
<i class="d" style="left:230px;top:256px"></i>
<i class="d" style="left:238px;top:256px"></i>
<i class="d" style="left:268px;top:256px"></i>
<i class="d" style="left:276px;top:256px"></i>
<i class="d" style="left:306px;top:256px"></i>
<i class="d" style="left:315px;top:256px"></i>
<i class="d" style="left:323px;top:256px"></i>
<span class="t n" style="left:330px;top:252px;color:#0f0;">F</span>
<span class="t n w" style="left:338px;top:252px;color:#0f0;">-</span>
<span class="t n" style="left:346px;top:252px;color:#0f0;">5</span>
<i class="d" style="left:380px;top:256px"></i>
<span class="t n" style="left:385px;top:252px;color:#0f0;">8</span>
<i class="d" style="left:418px;top:256px"></i>
<i class="d" style="left:426px;top:256px"></i>
<i class="d" style="left:456px;top:256px"></i>
<i class="d" style="left:465px;top:256px"></i>
<i class="d" style="left:473px;top:256px"></i>
<i class="d" style="left:484px;top:256px"></i>
<i class="d" style="left:492px;top:256px"></i>
<i class="d" style="left:500px;top:256px"></i>
<i class="d" style="left:530px;top:256px"></i>
<i class="d" style="left:538px;top:256px"></i>
<i class="d" style="left:568px;top:256px"></i>
<i class="d" style="left:576px;top:256px"></i>
<i class="d" style="left:606px;top:256px"></i>
<i class="d" style="left:615px;top:256px"></i>
<i class="d" style="left:623px;top:256px"></i>
<span class="t n" style="left:11px;top:260px;color:#fff;">2F</span>
<span class="t n" style="left:30px;top:260px;color:#0f0;">F</span>
<span class="t n w" style="left:38px;top:260px;color:#0f0;">-</span>
<span class="t n" style="left:46px;top:260px;color:#0f0;">4</span>
<i class="d" style="left:80px;top:264px"></i>
<span class="t n" style="left:85px;top:260px;color:#0f0;">7</span>
<i class="d" style="left:118px;top:264px"></i>
<i class="d" style="left:126px;top:264px"></i>
<i class="d" style="left:156px;top:264px"></i>
<i class="d" style="left:165px;top:264px"></i>
<i class="d" style="left:173px;top:264px"></i>
<i class="d" style="left:184px;top:264px"></i>
<i class="d" style="left:192px;top:264px"></i>
<i class="d" style="left:200px;top:264px"></i>
<i class="d" style="left:230px;top:264px"></i>
<i class="d" style="left:238px;top:264px"></i>
<i class="d" style="left:268px;top:264px"></i>
<i class="d" style="left:276px;top:264px"></i>
<i class="d" style="left:306px;top:264px"></i>
<i class="d" style="left:315px;top:264px"></i>
<i class="d" style="left:323px;top:264px"></i>
<span class="t n" style="left:330px;top:260px;color:#0f0;">F</span>
<span class="t n w" style="left:338px;top:260px;color:#0f0;">-</span>
<span class="t n" style="left:346px;top:260px;color:#0f0;">4</span>
<i class="d" style="left:380px;top:264px"></i>
<span class="t n" style="left:385px;top:260px;color:#0f0;">8</span>
<i class="d" style="left:418px;top:264px"></i>
<i class="d" style="left:426px;top:264px"></i>
<i class="d" style="left:456px;top:264px"></i>
<i class="d" style="left:465px;top:264px"></i>
<i class="d" style="left:473px;top:264px"></i>
<i class="d" style="left:484px;top:264px"></i>
<i class="d" style="left:492px;top:264px"></i>
<i class="d" style="left:500px;top:264px"></i>
<i class="d" style="left:530px;top:264px"></i>
<i class="d" style="left:538px;top:264px"></i>
<i class="d" style="left:568px;top:264px"></i>
<i class="d" style="left:576px;top:264px"></i>
<i class="d" style="left:606px;top:264px"></i>
<i class="d" style="left:615px;top:264px"></i>
<i class="d" style="left:623px;top:264px"></i>
<div style="left:10px;top:268px;width:617px;height:8px;background:#333;"></div>
<span class="t n" style="left:11px;top:268px;color:#ff0;">30</span>
<span class="t n" style="left:30px;top:268px;color:#0f0;">B</span>
<span class="t n w" style="left:38px;top:268px;color:#0f0;">-</span>
<span class="t n" style="left:46px;top:268px;color:#0f0;">4</span>
<i class="d" style="left:80px;top:272px"></i>
<span class="t n" style="left:85px;top:268px;color:#0f0;">7</span>
<i class="d" style="left:118px;top:272px"></i>
<i class="d" style="left:126px;top:272px"></i>
<i class="d" style="left:156px;top:272px"></i>
<i class="d" style="left:165px;top:272px"></i>
<i class="d" style="left:173px;top:272px"></i>
<span class="t n" style="left:180px;top:268px;color:#0f0;">E</span>
<span class="t n w" style="left:188px;top:268px;color:#0f0;">-</span>
<span class="t n" style="left:196px;top:268px;color:#0f0;">4</span>
<i class="d" style="left:230px;top:272px"></i>
<span class="t n" style="left:235px;top:268px;color:#0f0;">3</span>
<i class="d" style="left:268px;top:272px"></i>
<i class="d" style="left:276px;top:272px"></i>
<i class="d" style="left:306px;top:272px"></i>
<i class="d" style="left:315px;top:272px"></i>
<i class="d" style="left:323px;top:272px"></i>
<span class="t n" style="left:330px;top:268px;color:#0f0;">E</span>
<span class="t n w" style="left:338px;top:268px;color:#0f0;">-</span>
<span class="t n" style="left:346px;top:268px;color:#0f0;">5</span>
<i class="d" style="left:380px;top:272px"></i>
<span class="t n" style="left:385px;top:268px;color:#0f0;">8</span>
<i class="d" style="left:418px;top:272px"></i>
<i class="d" style="left:426px;top:272px"></i>
<i class="d" style="left:456px;top:272px"></i>
<i class="d" style="left:465px;top:272px"></i>
<i class="d" style="left:473px;top:272px"></i>
<span class="t n" style="left:480px;top:268px;color:#0f0;">F</span>
<span class="t n w" style="left:488px;top:268px;color:#0f0;">-</span>
<span class="t n" style="left:496px;top:268px;color:#0f0;">5</span>
<i class="d" style="left:530px;top:272px"></i>
<span class="t n" style="left:535px;top:268px;color:#0f0;">1</span>
<i class="d" style="left:568px;top:272px"></i>
<i class="d" style="left:576px;top:272px"></i>
<i class="d" style="left:606px;top:272px"></i>
<i class="d" style="left:615px;top:272px"></i>
<i class="d" style="left:623px;top:272px"></i>
<span class="t n" style="left:11px;top:276px;color:#fff;">31</span>
<span class="t n" style="left:30px;top:276px;color:#0f0;">G#4</span>
<i class="d" style="left:80px;top:280px"></i>
<span class="t n" style="left:85px;top:276px;color:#0f0;">7</span>
<i class="d" style="left:118px;top:280px"></i>
<i class="d" style="left:126px;top:280px"></i>
<i class="d" style="left:156px;top:280px"></i>
<i class="d" style="left:165px;top:280px"></i>
<i class="d" style="left:173px;top:280px"></i>
<i class="d" style="left:184px;top:280px"></i>
<i class="d" style="left:192px;top:280px"></i>
<i class="d" style="left:200px;top:280px"></i>
<i class="d" style="left:230px;top:280px"></i>
<i class="d" style="left:238px;top:280px"></i>
<i class="d" style="left:268px;top:280px"></i>
<i class="d" style="left:276px;top:280px"></i>
<i class="d" style="left:306px;top:280px"></i>
<i class="d" style="left:315px;top:280px"></i>
<i class="d" style="left:323px;top:280px"></i>
<i class="d" style="left:334px;top:280px"></i>
<i class="d" style="left:342px;top:280px"></i>
<i class="d" style="left:350px;top:280px"></i>
<i class="d" style="left:380px;top:280px"></i>
<i class="d" style="left:388px;top:280px"></i>
<i class="d" style="left:418px;top:280px"></i>
<i class="d" style="left:426px;top:280px"></i>
<i class="d" style="left:456px;top:280px"></i>
<i class="d" style="left:465px;top:280px"></i>
<i class="d" style="left:473px;top:280px"></i>
<i class="d" style="left:484px;top:280px"></i>
<i class="d" style="left:492px;top:280px"></i>
<i class="d" style="left:500px;top:280px"></i>
<i class="d" style="left:530px;top:280px"></i>
<i class="d" style="left:538px;top:280px"></i>
<i class="d" style="left:568px;top:280px"></i>
<i class="d" style="left:576px;top:280px"></i>
<i class="d" style="left:606px;top:280px"></i>
<i class="d" style="left:615px;top:280px"></i>
<i class="d" style="left:623px;top:280px"></i>
<span class="t n" style="left:11px;top:284px;color:#fff;">32</span>
<span class="t n" style="left:30px;top:284px;color:#0f0;">E</span>
<span class="t n w" style="left:38px;top:284px;color:#0f0;">-</span>
<span class="t n" style="left:46px;top:284px;color:#0f0;">4</span>
<i class="d" style="left:80px;top:288px"></i>
<span class="t n" style="left:85px;top:284px;color:#0f0;">7</span>
<i class="d" style="left:118px;top:288px"></i>
<i class="d" style="left:126px;top:288px"></i>
<i class="d" style="left:156px;top:288px"></i>
<i class="d" style="left:165px;top:288px"></i>
<i class="d" style="left:173px;top:288px"></i>
<i class="d" style="left:184px;top:288px"></i>
<i class="d" style="left:192px;top:288px"></i>
<i class="d" style="left:200px;top:288px"></i>
<i class="d" style="left:230px;top:288px"></i>
<i class="d" style="left:238px;top:288px"></i>
<i class="d" style="left:268px;top:288px"></i>
<i class="d" style="left:276px;top:288px"></i>
<i class="d" style="left:306px;top:288px"></i>
<i class="d" style="left:315px;top:288px"></i>
<i class="d" style="left:323px;top:288px"></i>
<span class="t n" style="left:330px;top:284px;color:#0f0;">E</span>
<span class="t n w" style="left:338px;top:284px;color:#0f0;">-</span>
<span class="t n" style="left:346px;top:284px;color:#0f0;">5</span>
<i class="d" style="left:380px;top:288px"></i>
<span class="t n" style="left:385px;top:284px;color:#0f0;">8</span>
<i class="d" style="left:418px;top:288px"></i>
<i class="d" style="left:426px;top:288px"></i>
<i class="d" style="left:456px;top:288px"></i>
<i class="d" style="left:465px;top:288px"></i>
<i class="d" style="left:473px;top:288px"></i>
<i class="d" style="left:484px;top:288px"></i>
<i class="d" style="left:492px;top:288px"></i>
<i class="d" style="left:500px;top:288px"></i>
<i class="d" style="left:530px;top:288px"></i>
<i class="d" style="left:538px;top:288px"></i>
<i class="d" style="left:568px;top:288px"></i>
<i class="d" style="left:576px;top:288px"></i>
<i class="d" style="left:606px;top:288px"></i>
<i class="d" style="left:615px;top:288px"></i>
<i class="d" style="left:623px;top:288px"></i>
<span class="t n" style="left:11px;top:292px;color:#fff;">33</span>
<span class="t n" style="left:30px;top:292px;color:#0f0;">B</span>
<span class="t n w" style="left:38px;top:292px;color:#0f0;">-</span>
<span class="t n" style="left:46px;top:292px;color:#0f0;">4</span>
<i class="d" style="left:80px;top:296px"></i>
<span class="t n" style="left:85px;top:292px;color:#0f0;">7</span>
<i class="d" style="left:118px;top:296px"></i>
<i class="d" style="left:126px;top:296px"></i>
<i class="d" style="left:156px;top:296px"></i>
<i class="d" style="left:165px;top:296px"></i>
<i class="d" style="left:173px;top:296px"></i>
<i class="d" style="left:184px;top:296px"></i>
<i class="d" style="left:192px;top:296px"></i>
<i class="d" style="left:200px;top:296px"></i>
<i class="d" style="left:230px;top:296px"></i>
<i class="d" style="left:238px;top:296px"></i>
<i class="d" style="left:268px;top:296px"></i>
<i class="d" style="left:276px;top:296px"></i>
<i class="d" style="left:306px;top:296px"></i>
<i class="d" style="left:315px;top:296px"></i>
<i class="d" style="left:323px;top:296px"></i>
<i class="d" style="left:334px;top:296px"></i>
<i class="d" style="left:342px;top:296px"></i>
<i class="d" style="left:350px;top:296px"></i>
<i class="d" style="left:380px;top:296px"></i>
<i class="d" style="left:388px;top:296px"></i>
<i class="d" style="left:418px;top:296px"></i>
<i class="d" style="left:426px;top:296px"></i>
<i class="d" style="left:456px;top:296px"></i>
<i class="d" style="left:465px;top:296px"></i>
<i class="d" style="left:473px;top:296px"></i>
<i class="d" style="left:484px;top:296px"></i>
<i class="d" style="left:492px;top:296px"></i>
<i class="d" style="left:500px;top:296px"></i>
<i class="d" style="left:530px;top:296px"></i>
<i class="d" style="left:538px;top:296px"></i>
<i class="d" style="left:568px;top:296px"></i>
<i class="d" style="left:576px;top:296px"></i>
<i class="d" style="left:606px;top:296px"></i>
<i class="d" style="left:615px;top:296px"></i>
<i class="d" style="left:623px;top:296px"></i>
</div>
<div style="left:27px;top:176px;width:2px;height:294px;background:#5676a6;"></div>
<div style="left:29px;top:176px;width:1px;height:294px;background:#1e2e4a;"></div>
<div style="left:177px;top:176px;width:2px;height:294px;background:#5676a6;"></div>
<div style="left:327px;top:176px;width:2px;height:294px;background:#5676a6;"></div>
<div style="left:477px;top:176px;width:2px;height:294px;background:#5676a6;"></div>
<span class="t n" style="left:103px;top:177px;color:#ff0;">1</span>
<span class="t n" style="left:253px;top:177px;color:#fff;">2</span>
<span class="t n" style="left:403px;top:177px;color:#ff0;">3</span>
<span class="t n" style="left:553px;top:177px;color:#fff;">4</span>
<div class="b nb" style="left:0px;top:324px;width:9px;height:8px"></div>
<div class="b nb" style="left:630px;top:324px;width:9px;height:8px"></div>
<div style="left:0px;top:470px;width:640px;height:10px;background:#22324c;"></div>
<div class="b" style="left:-1px;top:469px;width:11px;height:11px"></div>
<i class="ad" style="left:1px;top:474px"></i>
<div class="b" style="left:9px;top:469px;width:11px;height:11px"></div>
<i class="al" style="left:13px;top:471px"></i>
<div class="b" style="left:19px;top:469px;width:602px;height:11px"></div>
<i class="gripv" style="left:316px;top:472px"></i>
<div class="b" style="left:620px;top:469px;width:11px;height:11px"></div>
<i class="ar" style="left:623px;top:471px"></i>
<div class="b" style="left:630px;top:469px;width:11px;height:11px"></div>
<i class="ad" style="left:631px;top:474px"></i>
</div></body></html>
